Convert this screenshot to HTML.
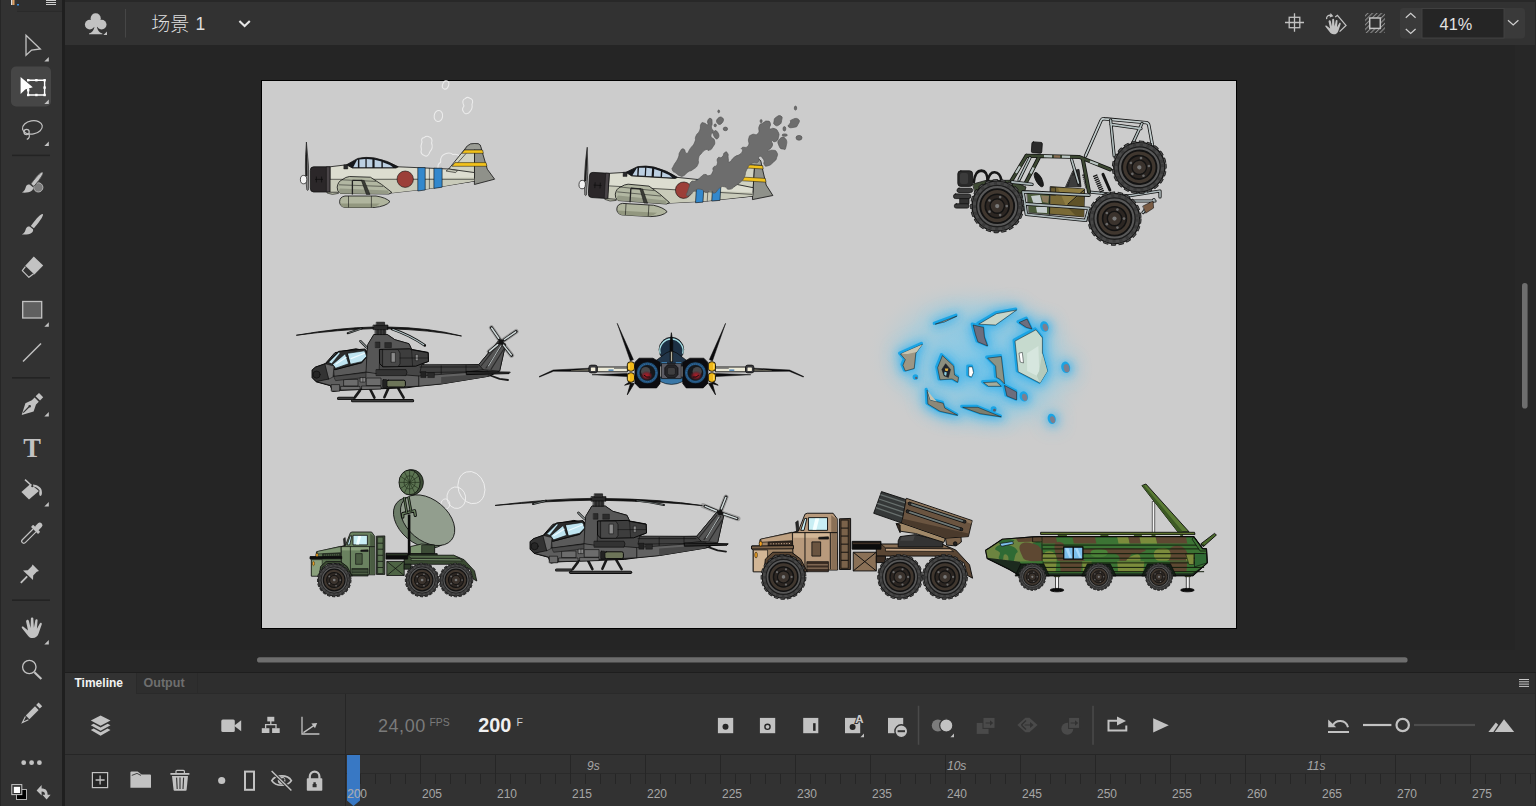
<!DOCTYPE html>
<html lang="zh"><head><meta charset="utf-8"><title>Animate</title>
<style>
html,body{margin:0;padding:0;background:#252525;overflow:hidden}
body{width:1536px;height:806px;position:relative;font-family:"Liberation Sans","Noto Sans CJK SC",sans-serif}
svg{display:block;position:absolute;left:0;top:0}
text{font-family:"Liberation Sans","Noto Sans CJK SC",sans-serif}
.rl{font-size:12px;fill:#a6a6a6}
.rs{font-size:12px;fill:#a6a6a6;font-style:italic}
</style></head><body>
<svg width="1536" height="806" viewBox="0 0 1536 806">
<!-- 10_chrome.svg -->
<!-- backgrounds -->
<rect x="0" y="0" width="1536" height="806" fill="#252525"/>
<!-- left toolbar -->
<rect x="0" y="0" width="62" height="806" fill="#323232"/>
<rect x="0" y="0" width="1" height="806" fill="#262626"/>
<rect x="62" y="0" width="3" height="806" fill="#1f1f1f"/>
<rect x="17" y="0" width="45" height="12" fill="#2f2f2f"/>
<rect x="17" y="11" width="45" height="1" fill="#2a2a2a"/>
<!-- top bar -->
<rect x="65" y="0" width="1471" height="2" fill="#282828"/>
<rect x="65" y="2" width="1471" height="43" fill="#323232"/>
<rect x="1535" y="0" width="1" height="45" fill="#272727"/>
<!-- stage -->
<rect x="261" y="80" width="976" height="549" fill="#000"/>
<rect x="262" y="81" width="974" height="547" fill="#cccccc"/>
<!-- scrollbars -->

<rect x="1515" y="45" width="21" height="605" fill="#272727"/><rect x="65" y="650" width="1471" height="22" fill="#272727"/><rect x="1522" y="283" width="5.6" height="125.5" rx="2.8" fill="#6e6e6e"/>
<rect x="257" y="657.2" width="1150.6" height="5.4" rx="2.7" fill="#6e6e6e"/>
<!-- timeline panel -->
<rect x="65" y="672" width="1471" height="1" fill="#1e1e1e"/>
<rect x="65" y="673" width="1471" height="133" fill="#323232"/>
<rect x="136" y="673" width="1400" height="21" fill="#2e2e2e"/>
<rect x="136" y="673" width="1" height="21" fill="#2a2a2a"/>
<rect x="197" y="673" width="1" height="21" fill="#2a2a2a"/>
<rect x="136" y="693" width="1400" height="1" fill="#2a2a2a"/>
<rect x="65" y="754" width="1471" height="1" fill="#262626"/>
<rect x="345" y="694" width="1" height="112" fill="#262626"/>
<rect x="346" y="773" width="1190" height="1" fill="#2a2a2a"/>

<!-- 12_toolbar.svg -->
<g id="toolbar" fill="#c2c2c2" stroke="none">
<!-- top-left tab bits -->
<rect x="11" y="0" width="1.5" height="5" fill="#dcdcdc"/><rect x="12.5" y="0" width="2" height="5" fill="#e0a060"/><rect x="17" y="4" width="2" height="1.5" fill="#3a8be0"/>
<rect x="46" y="0" width="10" height="1" fill="#cfcfcf"/><rect x="46" y="2" width="10" height="1" fill="#cfcfcf"/><rect x="46" y="4" width="10" height="1" fill="#cfcfcf"/>
<!-- selection arrow -->
<path d="M26 35.2 L40.3 49 L31.6 50 L26 55.2 Z" fill="none" stroke="#c2c2c2" stroke-width="1.3" stroke-linejoin="miter"/>
<path d="M48.8 57 V61.5 H44.3 Z"/>
<!-- free transform (selected) -->
<rect x="11" y="66.5" width="40" height="40" rx="5" fill="#464646"/>
<path d="M20.6 77 L20.6 94 L25.2 89.5 L32.8 87.2 Z" fill="#ffffff"/>
<g fill="none" stroke="#ffffff" stroke-width="1.4"><path d="M28.2 80.2 H44.6 V95 H28.2 V88"/></g>
<g fill="#ffffff"><rect x="27" y="79" width="2.4" height="2.4"/><rect x="35.2" y="79" width="2.4" height="2.4"/><rect x="43.4" y="79" width="2.4" height="2.4"/><rect x="43.4" y="86.4" width="2.4" height="2.4"/><rect x="43.4" y="93.8" width="2.4" height="2.4"/><rect x="35.2" y="93.8" width="2.4" height="2.4"/><rect x="27" y="93.8" width="2.4" height="2.4"/><rect x="27" y="89" width="2.4" height="2.4"/></g>
<path d="M48.8 99.5 V104 H44.3 Z"/>
<!-- lasso -->
<g fill="none" stroke="#c2c2c2" stroke-width="1.2"><ellipse cx="32.4" cy="127.4" rx="10" ry="6.6" transform="rotate(-10 32.4 127.4)"/><circle cx="26.6" cy="132" r="2.6"/><path d="M28.8 133.4 C30 136 29.5 138.5 26.8 139.3"/></g>
<path d="M48.8 141.5 V146 H44.3 Z"/>
<rect x="12" y="154.6" width="38" height="1.6" fill="#232323"/>
<!-- fluid brush -->
<g id="brushA"><path d="M42.7 172.2 C43.8 173 42 177 33.9 186.4 L30.8 184 C38 174.4 41.6 171.4 42.7 172.2 Z"/><path d="M29.9 184.8 L33 187.3 C34 190.5 30 193.2 21.9 192.6 C24.8 191.2 25.4 188.4 26 186.6 C26.8 184.6 28.8 184.2 29.9 184.8 Z"/></g>
<circle cx="38.3" cy="187.4" r="4.6" fill="#7c7c7c" stroke="#b4b4b4" stroke-width="1"/>
<path d="M42.7 172.2 C43.8 173 42 177 33.9 186.4 L30.8 184 C38 174.4 41.6 171.4 42.7 172.2 Z" stroke="#323232" stroke-width="0.8"/>
<!-- brush -->
<g transform="translate(0 41.9)"><path d="M42.7 172.2 C43.8 173 42 177 33.9 186.4 L30.8 184 C38 174.4 41.6 171.4 42.7 172.2 Z"/><path d="M29.9 184.8 L33 187.3 C34 190.5 30 193.2 21.9 192.6 C24.8 191.2 25.4 188.4 26 186.6 C26.8 184.6 28.8 184.2 29.9 184.8 Z"/></g>
<!-- eraser -->
<path d="M33.8 256.6 L43.2 265.6 L34.4 274.5 L25.2 265.8 Z"/>
<path d="M25.4 266.6 L22.3 270.6 L28.9 277.3 L33.6 273.8" fill="none" stroke="#c2c2c2" stroke-width="1.2" stroke-linejoin="round"/>
<!-- rectangle -->
<rect x="22.7" y="301.5" width="19" height="16.5" fill="#606060" stroke="#c2c2c2" stroke-width="1.3"/>
<path d="M48.8 322.3 V326.8 H44.3 Z"/>
<!-- line -->
<path d="M23 361.5 L41 343.5" stroke="#c2c2c2" stroke-width="1.4" fill="none"/>
<rect x="12" y="377" width="38" height="1.6" fill="#232323"/>
<!-- pen -->
<path d="M35.6 396.3 L39 393 L43.2 397.3 L40 400.6 Z"/>
<path d="M21.7 415 L25.4 403.2 L31.8 400.3 L34.6 397.6 L38.8 401.8 L36 404.6 L33.6 411.4 Z M23.6 413 L29.3 407.5 A1.3 1.3 0 1 0 28.4 406.6 L22.9 412.3 Z" fill-rule="evenodd"/>
<path d="M48.8 412 V416.5 H44.3 Z"/>
<!-- T -->
<text x="32.1" y="456.8" font-size="26.5" font-weight="bold" text-anchor="middle" fill="#c2c2c2" style="font-family:'Liberation Serif',serif">T</text>
<!-- bucket -->
<path d="M30.4 484 L38.9 491 L29 499.6 L21.4 492 Z"/>
<path d="M25 479.6 L32.3 486.2" stroke="#c2c2c2" stroke-width="1.5" fill="none"/>
<path d="M33 484.6 C37 484.8 40.6 487 41.6 490 C42.3 493 42 495.6 40.6 496 C39 496 39 493 39.6 490.6 C38 488 36 486.8 33 486.4 Z"/>
<circle cx="32.3" cy="486.2" r="1.1" fill="#323232"/>
<path d="M48.8 502 V506.5 H44.3 Z"/>
<!-- eyedropper -->
<g transform="rotate(45 32 533)"><rect x="29.4" y="519.4" width="5.2" height="8.4" rx="2.5"/><rect x="27" y="526.4" width="10" height="3" rx="0.8"/><path d="M29.9 529.4 V544.6 A2.1 2.1 0 0 0 34.1 544.6 V529.4" fill="none" stroke="#c2c2c2" stroke-width="1.2"/></g>
<!-- pin -->
<path d="M32.6 564.4 L39 571 L36.8 571.8 L33.2 575.6 L33 580 L23 570.4 L27.8 570.2 L31.6 566.4 Z"/>
<path d="M27.2 576.4 L20.8 582.8" stroke="#c2c2c2" stroke-width="1.8" fill="none"/>
<rect x="12" y="599.4" width="38" height="1.6" fill="#232323"/>
<!-- hand -->
<path d="M26.6 620.2 C27.6 619.4 28.6 619.8 28.9 621 L30.6 628 L30.9 618.6 C31 617.3 33.2 617.2 33.3 618.6 L33.9 627.8 L35.4 620 C35.7 618.7 37.8 619 37.6 620.4 L36.9 628.8 L39.8 623.4 C40.4 622.3 42.2 623 41.8 624.3 L38.6 633.6 C37.6 636.5 35.6 638.1 32.8 638.1 C30 638.1 28.6 636.8 27 634.4 L21.9 628 C21.3 626.8 22.4 626.3 23.5 626.8 L28 630.4 L26.1 621.6 C26 621 26.2 620.5 26.6 620.2 Z"/>
<path d="M48.8 640 V644.5 H44.3 Z"/>
<!-- zoom -->
<circle cx="29.3" cy="667" r="6.7" fill="none" stroke="#c2c2c2" stroke-width="1.3"/>
<path d="M34.4 672.2 L41.4 679" stroke="#c2c2c2" stroke-width="2.2" fill="none"/>
<!-- pencil -->
<path d="M36.2 705 L38.6 702.6 L42.2 706.2 L39.8 708.6 Z"/>
<path d="M25.8 715.6 L35 706.3 L38.6 709.9 L29.4 719.2 Z"/>
<path d="M25.4 716.6 L22.4 722.6 L28.4 719.8" fill="none" stroke="#c2c2c2" stroke-width="1.1" stroke-linejoin="miter"/>
<!-- dots -->
<circle cx="23.7" cy="762.7" r="2.4"/><circle cx="31.6" cy="762.7" r="2.4"/><circle cx="39.4" cy="762.7" r="2.4"/>
<!-- swatch + swap -->
<rect x="16.5" y="789.5" width="10" height="10" fill="#000" stroke="#b0b0b0" stroke-width="1"/>
<rect x="11.8" y="784.6" width="10" height="10" fill="#303030" stroke="#c8c8c8" stroke-width="1"/>
<rect x="13.8" y="786.8" width="6.2" height="6.2" fill="#fff"/>
<path d="M36.6 790.6 L41.6 785 L41.6 788.6 C45.6 788.6 47.6 790.6 47.6 794.8 L50.6 794.8 L46.6 799.6 L42.4 794.8 L45 794.8 C45 792.4 44 791.4 41.6 791.4 L41.6 795.4 Z"/>
</g>

<!-- 13_topbar.svg -->
<g id="topbar" fill="#c2c2c2">
<!-- club -->
<circle cx="95.7" cy="18.4" r="5.1"/><circle cx="89.8" cy="24.6" r="4.9"/><circle cx="101.6" cy="24.6" r="4.9"/><circle cx="95.7" cy="24.2" r="3"/>
<path d="M95 22 H96.4 C96.6 29 98.5 32.4 102.4 33.4 V34.2 H89 V33.4 C92.9 32.4 94.8 29 95 22 Z"/>
<path d="M107 31.4 V35 H103.4 Z"/>
<rect x="125" y="9" width="1" height="28.5" fill="#464646"/>
<text x="151.3" y="31.2" font-size="19" fill="#dedede" font-weight="300">场景<tspan font-size="17.5" dx="6.3" dy="-1">1</tspan></text>
<path d="M239.4 21 L244.6 26 L249.8 21" fill="none" stroke="#e6e6e6" stroke-width="2.1"/>
<!-- crosshair -->
<g fill="none" stroke="#c2c2c2" stroke-width="1.3"><path d="M1285 22.5 H1304 M1294.5 13.2 V31.8"/><rect x="1289.2" y="17.3" width="10.6" height="10.4"/></g>
<!-- hand rotate -->
<path d="M1329 20.6 C1329.8 20 1330.6 20.3 1330.8 21.2 L1332 26.6 L1332.2 19.6 C1332.3 18.6 1334 18.5 1334.1 19.6 L1334.6 26.4 L1335.8 20.6 C1336 19.6 1337.6 19.8 1337.5 20.9 L1337 27.2 L1339.2 23.2 C1339.7 22.3 1341 22.9 1340.7 23.9 L1338.3 30.9 C1337.5 33.1 1336 34.3 1333.8 34.3 C1331.6 34.3 1330.6 33.3 1329.3 31.5 L1325.4 26.6 C1325 25.7 1325.8 25.3 1326.6 25.7 L1330.1 28.4 L1328.6 21.7 C1328.5 21.2 1328.7 20.8 1329 20.6 Z"/>
<g fill="none" stroke="#c2c2c2" stroke-width="1.3"><path d="M1335.2 17 L1337.4 15.3 L1346 25.4 L1339.6 31.6"/><path d="M1326.6 19.2 C1326.2 16 1329 14.6 1331.4 15.6"/></g>
<path d="M1330.6 13 L1333.4 16.2 L1329.6 17.4 Z"/>
<!-- clip -->
<defs><pattern id="hatch" width="3.2" height="3.2" patternUnits="userSpaceOnUse" patternTransform="rotate(-45)"><rect x="0" y="0" width="3.2" height="1.1" fill="#8a8a8a"/></pattern></defs>
<rect x="1365" y="13" width="20" height="20" rx="1.5" fill="url(#hatch)"/>
<rect x="1369.7" y="18" width="10.6" height="10.4" fill="#323232" stroke="#c2c2c2" stroke-width="1.5"/>
<!-- zoom widget -->
<rect x="1400" y="8" width="125" height="30.5" rx="3.5" fill="#3a3a3a"/>
<rect x="1422" y="8.5" width="82" height="29.5" fill="#252525" stroke="#404040" stroke-width="1"/>
<g fill="none" stroke="#cfcfcf" stroke-width="1.2"><path d="M1405.8 17.8 L1410.7 13.4 L1415.6 17.8"/><path d="M1405.8 29 L1410.7 33.4 L1415.6 29"/><path d="M1508 20.2 L1513.2 25 L1518.4 20.2"/></g>
<text x="1439.6" y="29.8" font-size="16.3" fill="#e2e2e2">41%</text>
</g>

<!-- 14_timeline.svg -->
<g id="tl" fill="#c2c2c2">
<text x="74.5" y="687" font-size="12" font-weight="bold" fill="#f2f2f2">Timeline</text>
<text x="143.6" y="687" font-size="12.5" font-weight="bold" fill="#6e6e6e">Output</text>
<g fill="#c8c8c8"><rect x="1519" y="679" width="10" height="1"/><rect x="1519" y="681.3" width="10" height="1"/><rect x="1519" y="683.6" width="10" height="1"/><rect x="1519" y="685.9" width="10" height="1"/></g>
<rect x="1535" y="673" width="1" height="133" fill="#282828"/>
<!-- layers -->
<path d="M90.8 720.6 L100.6 715.6 L110.5 720.6 L100.6 725.7 Z"/>
<path d="M90.8 725.2 L93.6 723.8 L100.6 727.5 L107.6 723.8 L110.5 725.2 L100.6 730.7 Z"/>
<path d="M90.8 729.9 L93.6 728.5 L100.6 732.2 L107.6 728.5 L110.5 729.9 L100.6 735.8 Z"/>
<!-- camera -->
<rect x="221.3" y="719.5" width="13.5" height="12.6" rx="1.5"/><path d="M234 725.8 L241.2 720.2 V731.2 Z"/>
<!-- hierarchy -->
<rect x="267.3" y="716.8" width="7" height="4.6"/><rect x="261.8" y="728.2" width="7.6" height="4.8"/><rect x="272.1" y="728.2" width="7.6" height="4.8"/>
<path d="M270.8 721 V724.6 M265.6 728.4 V724.6 H276 V728.4" fill="none" stroke="#c2c2c2" stroke-width="1.3"/>
<!-- graph -->
<g fill="none" stroke="#c2c2c2" stroke-width="1.3"><path d="M302 716.8 V734 H319.4"/><path d="M303.4 732.6 L315.6 724.4"/></g><path d="M317.2 723 L311.4 723.6 L315 728.2 Z"/>
<!-- fps -->
<text x="378" y="732" font-size="18" fill="#7a7a7a" letter-spacing="0.55">24,00</text>
<text x="429.5" y="726" font-size="10.4" fill="#7a7a7a">FPS</text>
<text x="478.2" y="732" font-size="19.8" font-weight="bold" fill="#f0f0f0">200</text>
<text x="516.4" y="726" font-size="10.5" fill="#cfcfcf">F</text>
<!-- keyframe buttons -->
<rect x="717.9" y="717.9" width="15.3" height="15.3"/><circle cx="725.5" cy="726.8" r="3" fill="#262626"/>
<rect x="759.9" y="717.9" width="15.3" height="15.3"/><circle cx="767.5" cy="726.8" r="2.6" fill="none" stroke="#262626" stroke-width="1.4"/>
<rect x="803.2" y="717.9" width="15.1" height="15.3"/><rect x="813.1" y="723.2" width="2.5" height="7.6" fill="#262626"/>
<rect x="845" y="717.9" width="15.2" height="15.3"/><circle cx="852.6" cy="727" r="3" fill="#262626"/>
<text x="855.2" y="723" font-size="11.5" font-weight="bold" fill="#c8c8c8" stroke="#323232" stroke-width="2" paint-order="stroke">A</text>
<path d="M864 733.6 V737.2 H860.4 Z"/>
<rect x="888" y="717.9" width="15.2" height="15.3"/><circle cx="901.3" cy="731.2" r="6.4" fill="#c2c2c2" stroke="#323232" stroke-width="1.4"/><rect x="897.6" y="730.2" width="7.4" height="2" fill="#323232"/>
<rect x="917.8" y="705.8" width="1.5" height="39" fill="#4a4a4a"/>
<!-- onion -->
<circle cx="937.8" cy="725.4" r="6" fill="#7c7c7c"/><circle cx="946.3" cy="725.4" r="6.6" fill="#c2c2c2" stroke="#323232" stroke-width="1.2"/>
<path d="M954 733.6 V737.2 H950.4 Z"/>
<!-- disabled -->
<g fill="#4a4a4a">
<rect x="976.7" y="722.9" width="11.9" height="11"/><rect x="983" y="717.4" width="12" height="11" stroke="#323232" stroke-width="1"/>
<path d="M985.6 722.4 H990 V720.2 L993.2 723 L990 725.8 V723.6 H985.6 Z" fill="#323232"/>
<path d="M1017.3 725 L1025.4 717.8 L1029.4 717.8 L1037.6 725 L1029.4 732.2 L1025.4 732.2 Z"/>
<path d="M1021.4 725 L1026 720.6 M1021.4 725 L1026 729.4" stroke="#323232" stroke-width="1.4" fill="none"/>
<path d="M1024.6 724.4 H1030 V722 L1033.6 725 L1030 728 V725.6 H1024.6 Z" fill="#323232"/>
<circle cx="1067.3" cy="728.8" r="6"/><rect x="1068.6" y="717.4" width="11" height="11" stroke="#323232" stroke-width="1"/>
<path d="M1070.6 722.4 H1075 V720.2 L1078.2 723 L1075 725.8 V723.6 H1070.6 Z" fill="#323232"/>
</g>
<rect x="1092.3" y="705.8" width="1.5" height="39" fill="#4a4a4a"/>
<!-- loop -->
<path d="M1117.4 720.8 H1108.5 V730.5 H1126.3 V725.6" fill="none" stroke="#c2c2c2" stroke-width="2"/><path d="M1117 716.6 L1126 721 L1117 725.4 Z"/>
<!-- play -->
<path d="M1153.2 718.2 V732.4 L1168.8 725.3 Z"/>
<!-- undo -->
<rect x="1328" y="731" width="21" height="2"/>
<path d="M1333 725.4 C1335.6 719.6 1345.8 719 1348 727.2" fill="none" stroke="#c2c2c2" stroke-width="2"/><path d="M1328.2 719.4 V727.2 H1336.2 Z"/>
<!-- slider -->
<rect x="1363" y="723.9" width="28.4" height="2.2"/><circle cx="1402.7" cy="725" r="6.2" fill="none" stroke="#c2c2c2" stroke-width="2.2"/><rect x="1414" y="723.9" width="61" height="2.2" fill="#4d4d4d"/>
<!-- mountains -->
<path d="M1504 719.2 L1514.2 732 H1494.8 Z"/><path d="M1488.4 732 L1495.8 722.6 L1498.2 724.8 L1493.4 732 Z"/>
<!-- layer controls -->
<rect x="92.4" y="772.6" width="15.2" height="15" fill="#262626" stroke="#c2c2c2" stroke-width="1.2"/><path d="M95.6 780 H104.6 M100.1 775.5 V784.5" stroke="#c2c2c2" stroke-width="1.3" fill="none"/>
<path d="M130.4 772.6 Q130.4 771.6 131.4 771.6 H137.6 L141.6 774.6 H150 Q151 774.6 151 775.6 V787.8 H130.4 Z"/><path d="M131.8 775.4 L137 773.4 L141 775.4" fill="none" stroke="#323232" stroke-width="0.9"/>
<path d="M176 773 V771.2 Q176 770.3 177 770.3 H183.4 Q184.4 770.3 184.4 771.2 V773" fill="none" stroke="#c2c2c2" stroke-width="1.2"/><rect x="170.4" y="773" width="19" height="1.8"/>
<path d="M172 776 H188 L186.6 790 Q186.5 790.8 185.6 790.8 H174.6 Q173.7 790.8 173.6 790 Z"/><path d="M176.6 777.6 L177.2 789 M180 777.6 V789 M183.6 777.6 L183 789" stroke="#323232" stroke-width="1.1" fill="none"/>
<circle cx="221.7" cy="780.5" r="3.6"/>
<rect x="245" y="771.6" width="9" height="18.2" fill="none" stroke="#c2c2c2" stroke-width="2"/>
<path d="M271.8 780.6 C275.6 774.4 287.6 774.4 291.4 780.6 C287.6 786.8 275.6 786.8 271.8 780.6 Z" fill="none" stroke="#c2c2c2" stroke-width="1.7"/><circle cx="281.6" cy="780.6" r="3.8"/><circle cx="283" cy="779.4" r="1.5" fill="#323232"/>
<path d="M272 771.4 L291.4 790.4" stroke="#323232" stroke-width="3.4" fill="none"/><path d="M271.6 771 L291.4 790.6" stroke="#c2c2c2" stroke-width="1.4" fill="none"/>
<path d="M309.8 779 V776.4 A4.8 4.8 0 0 1 319.4 776.4 V779" fill="none" stroke="#c2c2c2" stroke-width="2.2"/><rect x="306.8" y="778.2" width="15.5" height="12.5" rx="0.8"/><path d="M313.4 782.2 H315.8 V784 H316.6 V787.2 H312.6 V784 H313.4 Z" fill="#323232"/>
<!-- playhead -->
<path d="M347 755 H360 V800.6 L353.5 806 L347 800.6 Z" fill="#3878c4"/>
<text x="347.6" y="798" font-size="12" fill="#6f9fd8">20</text>
</g>

<g id="ruler">
<rect x="345" y="755" width="1" height="29" fill="#262626"/>
<text x="347" y="798" class="rl">200</text>
<rect x="360" y="774" width="1" height="10" fill="#262626"/>
<rect x="375" y="774" width="1" height="10" fill="#262626"/>
<rect x="390" y="774" width="1" height="10" fill="#262626"/>
<rect x="405" y="774" width="1" height="10" fill="#262626"/>
<rect x="420" y="755" width="1" height="29" fill="#262626"/>
<text x="422" y="798" class="rl">205</text>
<rect x="435" y="774" width="1" height="10" fill="#262626"/>
<rect x="450" y="774" width="1" height="10" fill="#262626"/>
<rect x="465" y="774" width="1" height="10" fill="#262626"/>
<rect x="480" y="774" width="1" height="10" fill="#262626"/>
<rect x="495" y="755" width="1" height="29" fill="#262626"/>
<text x="497" y="798" class="rl">210</text>
<rect x="510" y="774" width="1" height="10" fill="#262626"/>
<rect x="525" y="774" width="1" height="10" fill="#262626"/>
<rect x="540" y="774" width="1" height="10" fill="#262626"/>
<rect x="555" y="774" width="1" height="10" fill="#262626"/>
<rect x="570" y="755" width="1" height="29" fill="#262626"/>
<text x="572" y="798" class="rl">215</text>
<rect x="585" y="774" width="1" height="10" fill="#262626"/>
<rect x="600" y="774" width="1" height="10" fill="#262626"/>
<rect x="615" y="774" width="1" height="10" fill="#262626"/>
<rect x="630" y="774" width="1" height="10" fill="#262626"/>
<rect x="645" y="755" width="1" height="29" fill="#262626"/>
<text x="647" y="798" class="rl">220</text>
<rect x="660" y="774" width="1" height="10" fill="#262626"/>
<rect x="675" y="774" width="1" height="10" fill="#262626"/>
<rect x="690" y="774" width="1" height="10" fill="#262626"/>
<rect x="705" y="774" width="1" height="10" fill="#262626"/>
<rect x="720" y="755" width="1" height="29" fill="#262626"/>
<text x="722" y="798" class="rl">225</text>
<rect x="735" y="774" width="1" height="10" fill="#262626"/>
<rect x="750" y="774" width="1" height="10" fill="#262626"/>
<rect x="765" y="774" width="1" height="10" fill="#262626"/>
<rect x="780" y="774" width="1" height="10" fill="#262626"/>
<rect x="795" y="755" width="1" height="29" fill="#262626"/>
<text x="797" y="798" class="rl">230</text>
<rect x="810" y="774" width="1" height="10" fill="#262626"/>
<rect x="825" y="774" width="1" height="10" fill="#262626"/>
<rect x="840" y="774" width="1" height="10" fill="#262626"/>
<rect x="855" y="774" width="1" height="10" fill="#262626"/>
<rect x="870" y="755" width="1" height="29" fill="#262626"/>
<text x="872" y="798" class="rl">235</text>
<rect x="885" y="774" width="1" height="10" fill="#262626"/>
<rect x="900" y="774" width="1" height="10" fill="#262626"/>
<rect x="915" y="774" width="1" height="10" fill="#262626"/>
<rect x="930" y="774" width="1" height="10" fill="#262626"/>
<rect x="945" y="755" width="1" height="29" fill="#262626"/>
<text x="947" y="798" class="rl">240</text>
<rect x="960" y="774" width="1" height="10" fill="#262626"/>
<rect x="975" y="774" width="1" height="10" fill="#262626"/>
<rect x="990" y="774" width="1" height="10" fill="#262626"/>
<rect x="1005" y="774" width="1" height="10" fill="#262626"/>
<rect x="1020" y="755" width="1" height="29" fill="#262626"/>
<text x="1022" y="798" class="rl">245</text>
<rect x="1035" y="774" width="1" height="10" fill="#262626"/>
<rect x="1050" y="774" width="1" height="10" fill="#262626"/>
<rect x="1065" y="774" width="1" height="10" fill="#262626"/>
<rect x="1080" y="774" width="1" height="10" fill="#262626"/>
<rect x="1095" y="755" width="1" height="29" fill="#262626"/>
<text x="1097" y="798" class="rl">250</text>
<rect x="1110" y="774" width="1" height="10" fill="#262626"/>
<rect x="1125" y="774" width="1" height="10" fill="#262626"/>
<rect x="1140" y="774" width="1" height="10" fill="#262626"/>
<rect x="1155" y="774" width="1" height="10" fill="#262626"/>
<rect x="1170" y="755" width="1" height="29" fill="#262626"/>
<text x="1172" y="798" class="rl">255</text>
<rect x="1185" y="774" width="1" height="10" fill="#262626"/>
<rect x="1200" y="774" width="1" height="10" fill="#262626"/>
<rect x="1215" y="774" width="1" height="10" fill="#262626"/>
<rect x="1230" y="774" width="1" height="10" fill="#262626"/>
<rect x="1245" y="755" width="1" height="29" fill="#262626"/>
<text x="1247" y="798" class="rl">260</text>
<rect x="1260" y="774" width="1" height="10" fill="#262626"/>
<rect x="1275" y="774" width="1" height="10" fill="#262626"/>
<rect x="1290" y="774" width="1" height="10" fill="#262626"/>
<rect x="1305" y="774" width="1" height="10" fill="#262626"/>
<rect x="1320" y="755" width="1" height="29" fill="#262626"/>
<text x="1322" y="798" class="rl">265</text>
<rect x="1335" y="774" width="1" height="10" fill="#262626"/>
<rect x="1350" y="774" width="1" height="10" fill="#262626"/>
<rect x="1365" y="774" width="1" height="10" fill="#262626"/>
<rect x="1380" y="774" width="1" height="10" fill="#262626"/>
<rect x="1395" y="755" width="1" height="29" fill="#262626"/>
<text x="1397" y="798" class="rl">270</text>
<rect x="1410" y="774" width="1" height="10" fill="#262626"/>
<rect x="1425" y="774" width="1" height="10" fill="#262626"/>
<rect x="1440" y="774" width="1" height="10" fill="#262626"/>
<rect x="1455" y="774" width="1" height="10" fill="#262626"/>
<rect x="1470" y="755" width="1" height="29" fill="#262626"/>
<text x="1472" y="798" class="rl">275</text>
<rect x="1485" y="774" width="1" height="10" fill="#262626"/>
<rect x="1500" y="774" width="1" height="10" fill="#262626"/>
<rect x="1515" y="774" width="1" height="10" fill="#262626"/>
<rect x="1530" y="774" width="1" height="10" fill="#262626"/>
<text x="587" y="770" class="rs">9s</text>
<text x="947" y="770" class="rs">10s</text>
<text x="1307" y="770" class="rs">11s</text>
</g>
<!-- 20_defs.svg -->
<defs>
<g id="wheel" stroke="none" stroke-linecap="butt">
 <circle r="0.965" fill="none" stroke="#141414" stroke-width="0.11" stroke-dasharray="0.19 0.1"/>
 <circle r="0.95" fill="#484848" stroke="#141414" stroke-width="0.05"/>
 <circle r="0.975" fill="none" stroke="#484848" stroke-width="0.05" stroke-dasharray="0.15 0.143" stroke-dashoffset="-0.02"/>
 <circle r="0.86" fill="none" stroke="#3a3a3a" stroke-width="0.1" stroke-dasharray="0.12 0.14"/>
 <circle r="0.78" fill="#585858" stroke="#1c1c1c" stroke-width="0.05"/>
 <circle r="0.64" fill="#40372f" stroke="#121212" stroke-width="0.07"/>
 <circle r="0.45" fill="#2c2622" stroke="#121212" stroke-width="0.06"/>
 <circle r="0.27" fill="#3b332d" stroke="#121212" stroke-width="0.05"/>
 <circle r="0.08" fill="#7a7a7a"/>
 <g fill="#6a6a6a"><circle cx="0.36" cy="0" r="0.05"/><circle cx="0.11" cy="0.34" r="0.05"/><circle cx="-0.29" cy="0.21" r="0.05"/><circle cx="-0.29" cy="-0.21" r="0.05"/><circle cx="0.11" cy="-0.34" r="0.05"/></g>
</g>
<g id="plane" stroke="#111" stroke-width="0.8" stroke-linejoin="round">
 <!-- fin -->
 <path d="M448.7 169 L467.3 146 Q470 143.4 474.6 143.5 L474.6 181 L440 186 Z" fill="#d0d2c2"/>
 <path d="M474.6 143.5 Q479 143.4 480.2 145 L487.3 169.2 L494.6 179.2 L474.4 184.5 Z" fill="#8f918a"/>
 <path d="M467.3 146 Q470 143.4 474.6 143.5 Q479 143.4 480.2 145 L481.6 149.8 H464.8 Z" fill="#9a9c94" stroke-width="0.5"/>
 <path d="M464.6 150 H482.6 L483.4 153.3 H461.8 Z" fill="#f2c21c" stroke-width="0.5"/>
 <path d="M455 162.6 H486 L487 166.3 H452 Z" fill="#f2c21c" stroke-width="0.5"/>
 <path d="M466 153.5 L458 162.5" fill="none" stroke-width="0.6"/>
 <!-- fuselage -->
 <path d="M329.9 166.8 L346.5 164.8 L398.3 166.8 L448.7 169 L474.6 172.6 L474.4 181 L428.8 188.7 L389 193.2 L329.9 192 Z" fill="#dcddd0"/>
 <path d="M329.9 179.4 L474 177.4 L474.4 181 L428.8 188.7 L389 193.2 L329.9 192 Z" fill="#c9cbba" stroke="none"/>
 <path d="M329.9 179.3 H474" fill="none" stroke-width="0.6"/>
 <path d="M448.7 169 L457.6 170.6 L455.6 172.6 L446 171 Z" fill="#c6c8b8" stroke-width="0.6"/>
 <!-- bands -->
 <path d="M417.8 167.6 H425.2 V190 L417.8 191 Z" fill="#3388cc" stroke-width="0.6"/>
 <path d="M433.9 168.2 H442.1 V187.2 L433.9 188.4 Z" fill="#3388cc" stroke-width="0.6"/>
 <path d="M429.4 168 V189" fill="none" stroke-width="0.5"/>
 <circle cx="405.2" cy="179.2" r="8.2" fill="#9c3f38" stroke-width="0.6"/>
 <!-- canopy -->
 <path d="M346.5 164.8 L357.8 158.4 Q366 156.6 374.4 157.9 Q388 160.6 398.3 166.8 L396 168 H352.4 Z" fill="#16181c"/>
 <g fill="#bcd0e2" stroke="none"><path d="M353.2 167.2 L357 160 L357.9 159.8 V167.2 Z"/><path d="M359.4 159.5 L365.4 159.1 V167.2 H359.4 Z"/><path d="M366.7 159.1 L372.4 159.4 V167.2 H366.7 Z"/><path d="M374.6 159.8 L381.4 161.6 V167.2 H374.6 Z"/><path d="M382.8 162.2 L389.8 165 L393 167.2 H382.8 Z"/></g>
 <rect x="343.8" y="164.8" width="4" height="4.2" fill="#2a2a2c" stroke-width="0.4"/>
 <!-- cowling -->
 <path d="M313.6 166.8 H329.9 V192 H313.6 Q310.3 192 310.3 188 V170.4 Q310.3 166.8 313.6 166.8 Z" fill="#2b2729"/>
 <path d="M326.4 166.8 H329.9 V192 H326.4 Z" fill="#4a4548" stroke-width="0.5"/>
 <path d="M315 179.4 H323 M316.4 176.6 V182.4 M321.6 176.6 V182.4" fill="none" stroke="#0c0c0c" stroke-width="0.7"/>
 <path d="M327 193 Q332 195.6 338.5 193.4 L338 192.2 H327 Z" fill="#b5b9a5" stroke-width="0.6"/>
 <!-- prop -->
 <path d="M306.4 142 Q309.6 166 308.4 189.8 Q307.6 191 306.8 189.8 Q304.2 168 306.4 142 Z" fill="#8e8e8e" stroke-width="0.6"/>
 <path d="M306.3 142 Q307.6 160 307.4 176 L305.6 176 Q305.4 158 306.3 142 Z" fill="#1a1a1a" stroke="none"/>
 <ellipse cx="303.6" cy="179.6" rx="3.2" ry="4.2" fill="#f4f4f4" stroke-width="0.7"/>
 <!-- wing -->
 <path d="M337.2 187.2 Q338 181.4 342 179.8 Q346 176.8 349.4 176.5 L370.4 177.2 Q382 184 391.8 192.4 L389 194 L340.4 193.4 Q336.8 191 337.2 187.2 Z" fill="#b2b7a2"/>
 <path d="M340 188.4 L388 190.6 L389 194 L340.4 193.4 Q337.6 191.4 340 188.4 Z" fill="#959a86" stroke="none"/>
 <path d="M342 179.8 L376 181.4 M339 184.8 L383 186.4" fill="none" stroke-width="0.5"/>
 <path d="M352.4 180.4 V194.4 M352.4 180.4 H362.4" fill="none" stroke="#222" stroke-width="1.3"/><path d="M361.4 180.4 H364.2 L370 194.4 H366.4 Z" fill="#3a3c36" stroke-width="0.5"/>
 <!-- tank -->
 <path d="M345 196 H376 Q386 197.6 390 201.6 Q386 206.4 374 207.5 H345 Q339.6 206.4 339.6 201.8 Q339.6 197 345 196 Z" fill="#b0b59e"/>
 <path d="M345 203.4 H380 Q376 207 372 207.5 H345 Q341 206.6 340.4 203.4 Z" fill="#92977f" stroke="none"/>
 <path d="M348.5 196 V207.4 M371.4 196 V207.5" fill="none" stroke-width="0.6"/>
</g>
<g id="heli" stroke="#0a0a0a" stroke-width="1" stroke-linejoin="round" stroke-linecap="round">
 <!-- skids -->
 <g fill="none" stroke="#1a1a1a" stroke-width="2.6"><path d="M354.8 397.4 L360 390.4 M369.6 388 L374.4 397.6 M384.4 397.2 L388.2 388.6 M398.4 388.6 L403.6 397.6"/></g>
 <path d="M352.6 400.7 H412.6" stroke="#0e0e0e" stroke-width="3.2" fill="none"/><path d="M352.6 400.7 H412.6" stroke="#3c3c3c" stroke-width="1.6" fill="none"/>
 <path d="M338.6 398.4 H353" stroke="#0e0e0e" stroke-width="3.2" fill="none"/><path d="M338.6 398.4 H353" stroke="#3c3c3c" stroke-width="1.6" fill="none"/>
 <!-- tail skid & stabilizer -->
 <path d="M489 375 L499.6 378.8 L508 380" fill="none" stroke="#1a1a1a" stroke-width="1.8"/>
 <path d="M312.5 369.7 L315.5 367.1 L325.2 363.7 L334.9 352.7 L355.9 348.8 L367.1 351.2 L368.2 344.2 L373.9 334.5 L387.3 334.5 L394.8 339.7 L409.0 343.7 L411.6 349.4 L428.1 352.4 L428.5 361.4 L422.1 363.7 L424.8 365.6 L478.7 364.7 L498.9 340.5 L505.6 344.2 L499.6 371.1 L489.2 376.1 L441.2 383.9 L418.8 386.1 L406.8 387.8 L340.9 390.2 L332.7 391.4 L330.4 385.7 L316.2 381.8 L312.5 377.9 Z" fill="#464646"/>
 <path d="M478.7 364.7 L498.9 340.5 L505.6 344.2 L499.6 371.1 L483.2 369.7 Z" fill="#555" stroke-width="0.6"/>
 <path d="M481 366 L499 343.4 M486 368 L502.6 345 M491 369.4 L504.4 348" fill="none" stroke="#2a2a2a" stroke-width="1.1"/>
 <path d="M488.4 366 L501 345.6" fill="none" stroke="#aeb6b6" stroke-width="1"/>
 <path d="M422.1 364.4 L478.7 364.7 L483.2 369.7 L466.7 371.9 L420.3 372.6 Z" fill="#3f3f3f" stroke-width="0.6"/>
 <path d="M441.2 366 V383.6 M466 365.6 V379.6 M420 367 H478" fill="none" stroke-width="0.6"/>
 <path d="M418.8 376 L488 371 L487.7 376.4 L441.2 384 L418.8 386.2 Z" fill="#626262" stroke-width="0.6"/>
 <path d="M441.2 377 L487.8 373.4 L487.7 376.4 L441.2 384 Z" fill="#484848" stroke="none"/>
 <path d="M466.7 371.4 L510.2 372.2 L509 373.6 L466.7 374.6 Z" fill="#2a2a2a"/>
 <rect x="421" y="371.6" width="5" height="6" fill="#222" stroke-width="0.4"/><rect x="428" y="372.6" width="6.4" height="5" fill="#2a2a2a" stroke-width="0.4"/>
 <!-- lower hull panels -->
 <path d="M316.4 381.6 L330.4 385.4 L332.8 391.4 L341 390 L418.8 386.2 V376 L367 372 L334 376 Z" fill="#5e5e5e" stroke-width="0.7"/>
 <path d="M334 369.8 L362 362.8 L367 356 L366.4 372 L334.4 376.4 Z" fill="#5a5a5a" stroke-width="0.6"/>
 <path d="M344 379.4 H358 V386 H344 Z M366.6 378 H381 V385.6 H366.6 Z M341 386.4 H360 V389.6 L341 390 Z M362 386 H381 V389 L362 389.6 Z" fill="#6c6c6c" stroke-width="0.6"/>
 <path d="M334 376.4 L366 372.6 V377.4 L336 380.6 Z" fill="#4a4a4a" stroke-width="0.5"/>
 <rect x="331.6" y="384.6" width="8" height="6.6" fill="#6a6a6a" stroke-width="0.6"/>
 <rect x="360.4" y="377.6" width="5" height="4.4" fill="#8a8a8a" stroke-width="0.5"/><path d="M362.9 377.6 V382" stroke-width="0.5"/>
 <!-- upper body -->
 <path d="M326.3 363.2 L338.7 351.3 L365 349 L368 355.3 L361.6 362.6 L335.4 369.6 L327 367.4 Z" fill="#2c2c2c"/>
 <path d="M328.8 362.3 L338.8 352.3 L340.2 353 L331.8 363.4 Z" fill="#bfe4f0" stroke-width="0.4"/>
 <path d="M332.8 364.2 L345.2 353.8 L348.6 363.7 L335.8 368.2 Z" fill="#bfe4f0" stroke-width="0.6"/>
 <path d="M347.7 353.3 L364.5 350.8 L366.7 356.3 L361.6 361.7 L350.6 364.2 Z" fill="#bfe4f0" stroke-width="0.6"/>
 <path d="M336 364 L346 357.6 M351 358.6 L364.6 353.2" stroke="#eefaff" stroke-width="1.2" fill="none"/>
 <path d="M367.9 344.2 L373.9 334.5 H387.3 L394.8 339.7 L409 343.8 L411.6 349.4 L380 349.6 L379 374 L366 372 L367.1 351.2 Z" fill="#565656" stroke-width="0.6"/>
 <rect x="375.6" y="342" width="4.4" height="5.6" fill="#2c2c2c" stroke-width="0.4"/><rect x="385" y="342.6" width="6.4" height="5" fill="#2c2c2c" stroke-width="0.4"/>
 <path d="M379.8 349.4 L409.8 348.8 L411.6 349.7 L428.1 352.7 L428.5 361.4 L422.1 363.7 L415.8 366.2 L382.8 366.8 L379.8 363.7 Z" fill="#3d3d3d"/>
 <path d="M383 349.6 H398 L400 353 V364 L398 366.6 H383 Z" fill="#484848" stroke-width="0.6"/>
 <rect x="391.4" y="352.6" width="4" height="9.6" fill="#8a8a8a" stroke-width="0.5"/>
 <rect x="415.6" y="354.6" width="2.6" height="6" fill="#8a8a8a" stroke-width="0.4"/>
 <path d="M400 358 H428 M411.6 350 L412.6 366" fill="none" stroke-width="0.5"/>
 <!-- pod & gun mount -->
 <path d="M376.4 369.6 H406 Q408 372 406 375.6 H376.4 Z" fill="#333" stroke-width="0.6"/>
 <rect x="386.6" y="380.2" width="18.8" height="6.8" rx="1.6" fill="#6d7559"/>
 <rect x="382.6" y="379.6" width="4.4" height="8" rx="1" fill="#222" stroke-width="0.5"/>
 <!-- nose -->
 <path d="M312.5 369.7 L315.5 367.2 L325.2 363.8 L330 368 L329 379 L316.4 381.6 L312.5 378 Z" fill="#333" stroke-width="0.7"/>
 <circle cx="316.6" cy="374.6" r="3.6" fill="#262626" stroke-width="0.6"/>
 <path d="M325.2 363.8 L334 366 L333 377 L329 379 Z" fill="#6a6a6a" stroke-width="0.5"/>
 <path d="M360.4 341.2 L366.6 347.4" stroke="#0e0e0e" stroke-width="2.4" fill="none"/><path d="M360.4 341.2 L366.6 347.4" stroke="#8e9696" stroke-width="1.1" fill="none"/>
 <!-- hub -->
 <rect x="373.4" y="325" width="14.6" height="4.6" fill="#2a2a2a" stroke-width="0.6"/><rect x="376.6" y="322.2" width="8" height="3.4" fill="#333" stroke-width="0.6"/><rect x="375.4" y="329.6" width="10.4" height="5" fill="#3a3a3a" stroke-width="0.6"/>
 <path d="M378 329.6 V334.5 M381 329.6 V334.5 M384 329.6 V334.5" stroke-width="0.6"/>
</g>
</defs>

<!-- 21_planes.svg -->
<g id="plane1">
 <g fill="none" stroke="#ececec" stroke-width="1.05" stroke-linejoin="round">
  <ellipse cx="445.6" cy="85" rx="3" ry="4.2" transform="rotate(20 445.6 85)"/>
  <path d="M464 106 Q461 100 465.4 98.6 Q467 96.4 470 98.2 Q474 99.4 472 104.4 Q473 109.4 468.6 113 Q465 115 463.4 111.6 Q461.4 109.2 464 106 Z"/>
  <ellipse cx="438.4" cy="116" rx="4.2" ry="5.6" transform="rotate(8 438.4 116)"/>
  <path d="M422 142 Q420.6 138 424.4 137.4 Q426.6 135.4 429.4 137 Q433 138.4 431.6 143 Q433.4 148 430 151.6 Q428 157.6 424.4 155.6 Q420 154 421.4 149.6 Q420.4 145.6 422 142 Z"/>
  <path d="M438 168 Q437.6 163.6 440.6 162.6 Q439.6 155.6 446 153.6 Q450 152 453 154.6 Q457.6 153.4 460 156.6"/>
 </g>
 <use href="#plane"/>
</g>
<g id="plane2">
 <use href="#plane" transform="translate(279.4 5.2) rotate(3.4 307 166)"/>
 <!-- smoke -->
 <g fill="#6d6d6d" stroke="#555" stroke-width="0.7" stroke-linejoin="round">
  <path d="M672.4 170.1 C671.6 167.6 671.8 169.7 673.6 165.8 C675.5 161.8 675.9 162.9 678.0 158.3 C680.1 153.8 678.0 155.2 679.9 152.1 C681.7 149.0 681.3 148.6 683.6 149.0 C685.8 149.4 684.4 153.6 686.7 153.3 C688.9 153.1 687.7 152.1 690.4 148.4 C693.1 144.7 692.9 146.3 694.7 142.2 C696.6 138.0 694.3 139.9 696.0 136.0 C697.6 132.1 698.0 134.3 699.7 130.4 C701.4 126.5 699.5 126.7 700.9 124.2 C702.4 121.7 701.8 122.7 704.0 123.0 C706.3 123.2 706.5 125.6 707.8 124.8 C709.0 124.0 706.7 122.5 707.8 120.5 C708.8 118.4 709.4 117.8 710.9 118.6 C712.3 119.4 711.9 119.9 712.1 123.0 C712.3 126.1 711.1 125.0 711.5 127.9 C711.9 130.8 713.6 128.9 713.3 131.6 C713.1 134.3 710.5 132.9 710.9 136.0 C711.3 139.1 714.0 137.2 714.6 140.9 C715.2 144.7 714.6 144.0 712.7 147.1 C710.9 150.2 711.3 149.4 709.0 150.2 C706.7 151.1 708.6 148.4 705.9 149.6 C703.2 150.9 703.4 151.1 700.9 154.0 C698.5 156.9 699.5 154.8 698.5 158.3 C697.4 161.8 699.7 160.8 697.8 164.5 C696.0 168.2 696.2 167.0 692.9 169.5 C689.6 172.0 691.0 169.9 687.9 172.0 C684.8 174.0 686.3 174.4 683.6 175.7 C680.9 176.9 682.3 176.5 679.9 175.7 C677.4 174.9 678.6 175.1 676.1 173.2 C673.6 171.3 673.2 172.6 672.4 170.1 Z"/>
  <path d="M689.2 186.8 C690.2 184.0 688.7 184.0 691.0 181.9 C693.3 179.8 692.7 182.3 696.0 180.6 C699.3 179.0 698.0 179.0 700.9 176.9 C703.8 174.9 702.0 174.9 704.7 174.4 C707.4 174.0 706.3 176.5 709.0 175.7 C711.7 174.9 711.3 174.6 712.7 172.0 C714.2 169.3 711.9 170.1 713.3 167.6 C714.8 165.1 715.6 167.6 717.1 164.5 C718.5 161.4 716.0 160.8 717.7 158.3 C719.3 155.8 719.8 158.9 722.0 157.1 C724.3 155.2 722.7 154.0 724.5 152.7 C726.4 151.5 726.4 151.5 727.6 153.3 C728.9 155.2 727.6 155.4 728.2 158.3 C728.9 161.2 727.4 162.4 729.5 162.0 C731.5 161.6 731.1 159.6 734.4 157.1 C737.8 154.6 736.7 156.7 739.4 154.6 C742.1 152.5 741.7 153.1 742.5 150.9 C743.3 148.6 740.0 149.4 741.9 147.8 C743.7 146.1 745.8 149.0 748.1 145.9 C750.4 142.8 747.5 142.2 748.7 138.5 C750.0 134.7 748.7 136.4 751.8 134.7 C754.9 133.1 755.5 136.4 758.0 133.5 C760.5 130.6 757.6 129.6 759.3 126.1 C760.9 122.5 760.3 124.6 763.0 123.0 C765.7 121.3 764.8 120.9 767.3 121.1 C769.8 121.3 769.6 121.1 770.4 123.6 C771.2 126.1 768.6 126.9 769.8 128.5 C771.0 130.2 771.5 127.5 774.1 128.5 C776.8 129.6 776.4 128.7 777.9 131.6 C779.3 134.5 779.3 133.9 778.5 137.2 C777.7 140.5 777.7 140.3 775.4 141.6 C773.1 142.8 772.7 139.5 771.7 140.9 C770.6 142.4 773.5 142.6 772.3 145.9 C771.0 149.2 767.9 149.4 767.9 150.9 C767.9 152.3 769.4 149.8 772.3 150.2 C775.2 150.7 775.2 149.6 776.6 152.1 C778.1 154.6 777.7 154.4 776.6 157.7 C775.6 161.0 776.4 159.3 773.5 162.0 C770.6 164.7 771.0 164.9 767.9 165.8 C764.8 166.6 765.7 166.6 764.2 164.5 C762.8 162.4 765.3 162.2 763.6 159.6 C761.9 156.9 761.1 155.6 759.3 156.5 C757.4 157.3 760.5 159.8 758.0 162.0 C755.5 164.3 755.5 160.8 751.8 163.3 C748.1 165.8 749.3 164.9 746.8 169.5 C744.4 174.0 746.4 172.8 744.4 176.9 C742.3 181.1 743.5 179.0 740.6 181.9 C737.8 184.8 739.4 183.1 735.7 185.6 C732.0 188.1 733.2 188.9 729.5 189.3 C725.8 189.7 727.8 187.3 724.5 186.8 C721.2 186.4 722.9 186.0 719.6 188.1 C716.2 190.2 717.5 192.2 714.6 193.1 C711.7 193.9 713.8 190.8 710.9 190.6 C708.0 190.4 709.2 192.8 705.9 192.4 C702.6 192.0 704.7 190.0 700.9 189.3 C697.2 188.7 698.0 188.9 694.7 190.6 C691.4 192.2 693.7 192.6 691.0 194.3 C688.3 195.9 687.7 196.8 686.7 195.5 C685.6 194.3 687.1 193.5 687.9 190.6 C688.7 187.7 688.1 189.7 689.2 186.8 Z"/>
  <path d="M776.0 117.4 C778.3 115.7 779.1 115.1 781.0 116.1 C782.8 117.2 782.2 117.6 781.6 120.5 C781.0 123.4 781.4 123.4 779.1 124.8 C776.8 126.3 776.4 126.1 774.8 124.8 C773.1 123.6 773.7 123.6 774.1 121.1 C774.6 118.6 773.7 119.0 776.0 117.4 Z"/>
  <path d="M791.5 119.9 C794.2 118.6 796.3 117.6 798.3 119.2 C800.4 120.9 799.2 122.1 797.7 124.8 C796.3 127.5 797.1 126.7 794.0 127.3 C790.9 127.9 789.7 128.1 788.4 126.7 C787.2 125.2 789.2 125.2 790.3 123.0 C791.3 120.7 788.8 121.1 791.5 119.9 Z"/>
  <path d="M779.1 139.7 C781.2 137.2 783.0 136.0 785.3 138.5 C787.6 140.9 786.8 143.6 785.9 147.1 C785.1 150.7 785.1 149.4 782.8 149.0 C780.6 148.6 780.3 149.0 779.1 145.9 C777.9 142.8 777.0 142.2 779.1 139.7 Z"/>
  <path d="M717.7 118.6 C719.3 116.7 721.2 116.5 722.7 118.0 C724.1 119.4 723.7 121.1 722.0 123.0 C720.4 124.8 719.1 125.0 717.7 123.6 C716.2 122.1 716.0 120.5 717.7 118.6 Z"/>
  <path d="M714.0 131.6 C715.0 130.0 716.2 130.2 717.7 132.3 C719.1 134.3 719.3 136.2 718.3 137.8 C717.3 139.5 716.0 139.3 714.6 137.2 C713.1 135.2 712.9 133.3 714.0 131.6 Z"/>
  <ellipse cx="725.4" cy="128.9" rx="2.2" ry="1.8"/>
  <ellipse cx="799.0" cy="137.8" rx="3.0" ry="2.4"/>
  <ellipse cx="795.5" cy="108.1" rx="1.2" ry="2.0"/>
  <ellipse cx="718.7" cy="111.4" rx="0.9" ry="1.4"/>
  <ellipse cx="784.4" cy="128.8" rx="1.4" ry="2.2"/>
  <ellipse cx="784.7" cy="135.1" rx="2.6" ry="1.2"/>
  <ellipse cx="761.1" cy="121.1" rx="1.0" ry="1.6"/>
  <ellipse cx="715.2" cy="125.4" rx="1.2" ry="1.4"/>
 </g>
</g>

<!-- 22_buggy.svg -->
<g id="buggy" stroke="#111" stroke-width="0.8" stroke-linejoin="round" stroke-linecap="round">
 <!-- roll cage (light tubes) -->
 <g fill="none">
  <path d="M1085.5 156 L1101 120.6 Q1102 118.4 1104.4 118.8 L1146 122.6 Q1148.4 122.8 1148.8 125.2 L1152.4 145" stroke="#111" stroke-width="3.4"/>
  <path d="M1085.5 156 L1101 120.6 Q1102 118.4 1104.4 118.8 L1146 122.6 Q1148.4 122.8 1148.8 125.2 L1152.4 145" stroke="#c2cccc" stroke-width="1.8"/>
  <path d="M1110.6 120 L1114.2 156 M1142 123.4 L1132.4 144 M1110.8 124.4 L1141 128.6" stroke="#111" stroke-width="3.2"/>
  <path d="M1110.6 120 L1114.2 156 M1142 123.4 L1132.4 144 M1110.8 124.4 L1141 128.6" stroke="#b4c0c0" stroke-width="1.6"/>
 </g>
 <!-- rear frame -->
 <g fill="none">
  <path d="M1128 196 L1160 191 V197 M1130 201 H1155 M1154 199.6 L1143 212.6 M1089 192 L1130 196" stroke="#111" stroke-width="3.2"/>
  <path d="M1128 196 L1160 191 V197 M1130 201 H1155 M1154 199.6 L1143 212.6 M1089 192 L1130 196" stroke="#aeb9bb" stroke-width="1.6"/>
 </g>
 <path d="M1143 206 L1153 201 L1153.6 208 L1146 213 Z" fill="#7a5c44" stroke-width="0.6"/>
 <!-- hood / front -->
 <path d="M973 184 L986 180.4 L1011.7 180.3 L1026 187 L1024 194 L976 196 Z" fill="#3e4a34"/>
 <path d="M985 186 L998 183.6 L1003 187 L990 189.6 Z" fill="#67744e" stroke="none"/>
 <g fill="none" stroke="#161616" stroke-width="2.6"><path d="M973.8 182 Q975 170.6 981.4 170.6 Q987.6 170.8 987.6 181"/><path d="M987.6 181 Q989.4 172 994.6 172.2 Q1000 172.6 1001.4 180"/></g>
 <rect x="957.8" y="170.8" width="14.8" height="15.6" rx="3" fill="#2a2a2a"/>
 <rect x="960" y="173" width="8" height="11" rx="2" fill="#3b3b3b" stroke="none"/>
 <rect x="957" y="188.2" width="15.6" height="4.3" rx="2" fill="#3a3a3a"/>
 <rect x="953.5" y="193.9" width="17.3" height="4.7" rx="2.2" fill="#3a3a3a"/>
 <rect x="960" y="198.6" width="9" height="5.2" fill="#303030"/>
 <rect x="954.3" y="203.8" width="14.8" height="4.3" rx="2" fill="#3a3a3a"/>
 <!-- side camo panel -->
 <path d="M1027 192.4 L1050 194 V214.6 L1029 212.6 Z" fill="#4a5a3a" stroke-width="0.5"/>
 <path d="M1031 196 L1040 195 L1042 203 L1034 205 Z M1036 207 L1047 206 L1047 213 L1037 212.6 Z" fill="#c4cccc" stroke="none"/>
 <path d="M1041 195.4 L1049 196 L1048 203 L1043 202 Z" fill="#8a7a5c" stroke="none"/>
 <!-- seat, wheel, shocks -->
 <path d="M1073.4 170.4 L1079 169.4 L1081 186.8 H1066 Z" fill="#2a2a2a"/><path d="M1071 176 L1076 175 L1077.6 186.8 H1068.6 Z" fill="#3c3c3c" stroke="none"/>
 <ellipse cx="1038.8" cy="179.6" rx="3" ry="8" transform="rotate(-28 1038.8 179.6)" fill="#1c1c1c"/>
 <g fill="none" stroke="#141414"><path d="M1083.8 174.4 L1087.2 188.4" stroke-width="3.4" stroke-dasharray="1.2 0.8" stroke-linecap="butt"/><path d="M1095 175.2 L1102 191.8" stroke-width="4.6" stroke-dasharray="1.3 0.8" stroke-linecap="butt"/><path d="M1103 174.4 L1109.8 190" stroke-width="3"/></g>
 <!-- box -->
 <path d="M1050.6 186.6 L1084.6 189 L1083.8 216.8 L1049.9 214.2 Z" fill="#7a6a36"/>
 <path d="M1058 188 L1084.6 189 L1066 206 Z" fill="#8f7d42" stroke="none"/>
 <path d="M1066 206 L1084 192 L1083.8 216.8 L1076 216 Z" fill="#5f5228" stroke="none"/>
 <path d="M1084 190 L1068 204" fill="none" stroke-width="0.9"/>
 <rect x="1051" y="187.6" width="4.6" height="7.6" fill="#6a5c30" stroke-width="0.6"/>
 <!-- main frame: dark camo tubes -->
 <g fill="none">
  <path d="M1026.4 155.8 L1079.4 157 L1110 169.4 M1026.4 155.8 L1011.7 180.3 M1038.6 158 L1025.6 183.2 M1082.9 159.6 L1089 191.8" stroke="#111" stroke-width="4"/>
  <path d="M1026.4 155.8 L1079.4 157 L1110 169.4 M1026.4 155.8 L1011.7 180.3 M1038.6 158 L1025.6 183.2 M1082.9 159.6 L1089 191.8" stroke="#3c4832" stroke-width="2.4"/>
  <path d="M1044 156.2 L1052 156.4 M1062 156.6 L1070 156.8 M1090 161.4 L1098 164.6 M1020 166.4 L1016 173 M1033.6 167.6 L1030.6 173.4" stroke="#b9c4c2" stroke-width="2.2" stroke-linecap="butt"/>
  <path d="M1054 156.4 L1060 156.6" stroke="#8a6e54" stroke-width="2.2" stroke-linecap="butt"/>
  <path d="M1071.6 159.6 L1078.5 183 M1030 157.6 L1019 180 " stroke="#111" stroke-width="3.2"/>
  <path d="M1071.6 159.6 L1078.5 183 M1030 157.6 L1019 180" stroke="#b4c0c0" stroke-width="1.6"/>
  <!-- lower rails -->
  <path d="M1012 182 L1032 184.4 M1023 191.8 L1089 195.2 M1026.4 204 L1089 208.4 M1026.4 214.4 L1085.5 220.4 L1089 208.4 M1023 191.8 L1026.4 214.4" stroke="#111" stroke-width="3.4"/>
  <path d="M1012 182 L1032 184.4 M1023 191.8 L1089 195.2 M1026.4 204 L1089 208.4 M1026.4 214.4 L1085.5 220.4 L1089 208.4 M1023 191.8 L1026.4 214.4" stroke="#aab6b8" stroke-width="1.8"/>
 </g>
 <rect x="1031.6" y="142.1" width="10.4" height="10.8" rx="1.4" fill="#2b2b2b" transform="rotate(4 1036 148)"/>
 <!-- wheels -->
 <use href="#wheel" transform="translate(1139.3 167.3) rotate(-8) scale(26.9 26.2)" stroke-width="0.05"/>
 <use href="#wheel" transform="translate(997.2 206.1) scale(26.5)"/>
 <use href="#wheel" transform="translate(1114.5 218.6) scale(26.5)"/>
</g>

<!-- 23_helis.svg -->
<g id="heli1">
 <use href="#heli"/>
 <!-- rotor -->
 <g stroke-linecap="round" stroke-linejoin="round">
  <path d="M296.7 335.2 Q340 327.6 373.6 327 L373.6 328.6 Q340 329.6 296.7 335.2 Z" fill="#161616" stroke="#0e0e0e" stroke-width="0.8"/>
  <path d="M387.8 327 Q430 327.6 461.5 336 Q430 329.8 387.8 328.8 Z" fill="#161616" stroke="#0e0e0e" stroke-width="0.8"/>
  <path d="M347.7 333.2 L362 328.4" stroke="#0e0e0e" stroke-width="2" fill="none"/><path d="M348.6 332.9 L361 328.8" stroke="#77807f" stroke-width="0.8" fill="none"/>
  <path d="M392 329 Q410 335 424.8 345.4" stroke="#0e0e0e" stroke-width="2.6" fill="none"/><path d="M393 329.4 Q410 335.2 423.8 344.8" stroke="#b4c6c8" stroke-width="1.1" fill="none"/>
 </g>
 <!-- tail rotor -->
 <g transform="translate(501.1 341.9)">
  <g stroke="#444" stroke-opacity="0.35" stroke-width="5" stroke-linecap="round"><path d="M0 0 L-9.7 -14.2 M0 0 L15 -10.4 M0 0 L10.5 13.5 M0 0 L-11.9 9.8"/></g>
  <g stroke="#1a1a1a" stroke-width="3" stroke-linecap="round"><path d="M-2 -3 L-9.7 -14.2 M3 -2 L15 -10.4 M2 3 L10.5 13.5 M-3 2.4 L-11.9 9.8"/></g>
  <g stroke="#cfd9d9" stroke-width="1.5" stroke-linecap="round"><path d="M-2.4 -3.6 L-9.5 -13.9 M3.4 -2.4 L14.6 -10.1 M2.4 3.2 L10.2 13.1 M-3.4 2.8 L-11.5 9.5"/></g>
  <circle r="2.6" fill="#141414"/>
 </g>
</g>
<g id="heli2">
 <use href="#heli" transform="translate(218 171.6)"/>
 <g stroke-linecap="round" stroke-linejoin="round">
  <path d="M495.5 505.4 Q550 498.6 591.6 498.4 L591.6 500.2 Q550 500.8 495.5 505.4 Z" fill="#161616" stroke="#0e0e0e" stroke-width="0.8"/>
  <path d="M605.8 498.6 Q660 499 702.4 505.6 Q660 501.4 605.8 500.4 Z" fill="#161616" stroke="#0e0e0e" stroke-width="0.8"/>
  <path d="M533 504 L546 500.8" stroke="#0e0e0e" stroke-width="2" fill="none"/><path d="M534 503.7 L545 501" stroke="#77807f" stroke-width="0.8" fill="none"/>
  <path d="M636 500.6 Q650 502 664 505" stroke="#0e0e0e" stroke-width="2" fill="none"/><path d="M637 500.8 Q650 502.2 663 504.8" stroke="#77807f" stroke-width="0.8" fill="none"/>
 </g>
 <g transform="translate(720 512.6)">
  <g stroke="#444" stroke-opacity="0.35" stroke-width="5" stroke-linecap="round"><path d="M0 0 L6 -15.6 M0 0 L18 6 M0 0 L-17 -7"/></g>
  <g stroke="#1a1a1a" stroke-width="3" stroke-linecap="round"><path d="M1 -3 L6 -15.6 M3 1 L17 6 M-3 -1.4 L-15 -6.4"/></g>
  <g stroke="#cfd9d9" stroke-width="1.5" stroke-linecap="round"><path d="M1.4 -3.8 L5.8 -15.2 M3.8 1.4 L16.6 5.8 M-3.6 -1.6 L-14.6 -6.2"/></g>
  <circle r="2.6" fill="#141414"/>
 </g>
</g>

<!-- 24_jet.svg -->
<g id="jet" stroke="#0a0a0a" stroke-width="0.7" stroke-linejoin="round">
 <defs>
  <radialGradient id="noz" cx="0.5" cy="0.5" r="0.5"><stop offset="0" stop-color="#15181c"/><stop offset="0.66" stop-color="#15181c"/><stop offset="0.76" stop-color="#23527c"/><stop offset="0.92" stop-color="#23527c"/><stop offset="1" stop-color="#122c44"/></radialGradient>
  <radialGradient id="glow" cx="0.5" cy="0.5" r="0.5"><stop offset="0" stop-color="#b01c28"/><stop offset="0.5" stop-color="#8c1c26" stop-opacity="0.85"/><stop offset="1" stop-color="#5c1420" stop-opacity="0"/></radialGradient>
  <g id="jethalf">
   <!-- wing -->
   <path d="M539 376.6 L553.2 370 L589.2 368.2 V371.6 L553.6 371.2 L539.6 377 Z" fill="#0b0b0d" stroke-width="0.5"/>
   <path d="M571 370.2 L589 369.6 V370.4 L571 370.6 Z" fill="#b8b49c" stroke="none"/>
   <path d="M597 367 H627.4 V371.8 H597 Z" fill="#ecead8" stroke-width="0.9"/>
   <path d="M614 367.4 H627 V368.8 H614 Z" fill="#6c6c6c" stroke="none"/>
   <path d="M608.5 369.4 H613.5 V371 H608.5 Z" fill="#5a8ab8" stroke="none"/>
   <path d="M592 374.7 L627.4 373.4 V376.6 Z" fill="#0b0b0d" stroke-width="0.5"/>
   <rect x="588.9" y="365.1" width="8.4" height="7.8" rx="2.2" fill="#3a3a3e" stroke-width="0.7"/><rect x="590.9" y="367.5" width="4.4" height="3.6" rx="0.6" fill="#f0ecd8" stroke="none"/>
   <!-- tail & lower fin -->
   <path d="M617.2 323.3 L630.4 361 L633.4 359.6 Z" fill="#0b0b0d" stroke-width="0.5"/>
   <path d="M630.6 383 L634.2 383.6 L627.3 394.8 Z M631 383.6 L624.6 385.2 L630 381.6 Z" fill="#0b0b0d"/>
   <!-- engine -->
   <path d="M639 358.2 H653 L660 362.4 V383.6 L656.6 387.9 H639.6 L634.9 383.2 V362.4 Z" fill="#0c0c10"/>
   <circle cx="647.4" cy="372.8" r="11" fill="url(#noz)" stroke-width="0.6"/>
   <circle cx="647.4" cy="372.8" r="8.8" fill="none" stroke="#3c84bc" stroke-width="0.8" stroke-dasharray="0.7 1.3"/>
   <circle cx="645.6" cy="371.6" r="4.6" fill="#48484a" stroke="none"/>
   <ellipse cx="646.6" cy="375.6" rx="6.2" ry="4.8" fill="url(#glow)" stroke="none"/>
   <path d="M644 375.2 Q646.6 378 650 377" fill="none" stroke="#0a0a0a" stroke-width="0.9"/>
   <!-- yellow -->
   <rect x="627.3" y="361.8" width="7.2" height="9.4" rx="3" fill="#f0b818" stroke-width="0.9"/><rect x="627.3" y="372.8" width="7.2" height="9.4" rx="3" fill="#f0b818" stroke-width="0.9"/>
   <path d="M629 364 V369 M629 375 V380" stroke="#ffe070" stroke-width="1" fill="none"/>
  </g>
 </defs>
 <!-- canopy -->
 <circle cx="671.4" cy="349.6" r="12.3" fill="#1c3044" stroke-width="0.8"/>
 <path d="M660.2 353.6 A11.6 11.6 0 1 1 682.6 353.6" fill="none" stroke="#a8e2e6" stroke-width="1.3"/>
 <path d="M654.2 362 L666 353 L671.4 350.6 L676.8 353 L688.6 362 V366 H654.2 Z" fill="#22364a"/>
 <path d="M671.4 332.7 L672.8 342.4 L672.6 362 H670.2 L670 342.4 Z" fill="#0b0b0d"/>
 <path d="M670.8 351.6 H672.2 V361.6 H670.8 Z" fill="#e8e4c8" stroke-width="0.4"/>
 <!-- center -->
 <path d="M659.9 377 H683 V381.4 Q671.4 387.4 659.9 381.4 Z" fill="#3a78a8" stroke-width="0.6"/>
 <rect x="661.5" y="363.4" width="19.8" height="15.2" fill="#5a5a62"/>
 <path d="M667.6 364.8 H675.2 L678 367.8 V374.6 L675.2 377.6 H667.6 L664.8 374.6 V367.8 Z" fill="#26262a"/>
 <path d="M668.8 367.4 H674 L675.4 369 V373.4 L674 375 H668.8 L667.4 373.4 V369 Z" fill="#3e3e40" stroke-width="0.4"/>
 <path d="M661.5 362.6 H667 M675.8 362.6 H681.3" stroke="#3a78a8" stroke-width="1.4"/>
 <use href="#jethalf"/>
 <use href="#jethalf" transform="translate(1342.8 0) scale(-1 1)"/>
</g>

<!-- 25_shards.svg -->
<g id="shards">
<defs><radialGradient id="sg1" cx="0.5" cy="0.5" r="0.5"><stop offset="0" stop-color="#78c8ec" stop-opacity="0.85"/><stop offset="0.4" stop-color="#84cae8" stop-opacity="0.72"/><stop offset="0.68" stop-color="#98cee2" stop-opacity="0.46"/><stop offset="0.86" stop-color="#b0ccd6" stop-opacity="0.18"/><stop offset="1" stop-color="#cccccc" stop-opacity="0"/></radialGradient>
<filter id="sblur" x="-30%" y="-30%" width="160%" height="160%"><feGaussianBlur stdDeviation="4.5"/></filter>
<filter id="sblur2" x="-30%" y="-30%" width="160%" height="160%"><feGaussianBlur stdDeviation="9"/></filter></defs>
<ellipse cx="982" cy="362" rx="116" ry="82" fill="url(#sg1)" transform="rotate(8 982 362)"/>
<g fill="#40b4ec" stroke="#40b4ec" stroke-width="9" stroke-linejoin="round" filter="url(#sblur2)" opacity="0.55">
<path d="M1015.0 341.1 L1036.0 329.8 L1042.4 337.9 L1042.4 353.2 L1047.3 371.0 L1040.0 383.1 L1018.2 371.8 Z"/>
<path d="M978.7 324.2 L996.5 313.7 L1016.6 310.0 L995.6 325.0 Z"/>
<path d="M973.1 325.0 L983.5 327.4 L984.4 337.1 L987.6 346.0 L977.9 341.9 L975.5 334.7 Z"/>
<path d="M1019.0 322.6 L1027.1 319.0 L1031.9 329.0 L1026.3 327.4 Z"/>
<path d="M935.2 324.2 L956.9 316.1 L944.8 321.8 Z"/>
<path d="M900.5 354.0 L922.3 344.4 L915.8 353.2 L914.2 368.5 L905.3 371.0 L902.9 365.3 L905.3 359.7 Z"/>
<path d="M942.4 355.6 L953.7 366.1 L954.5 375.0 L958.5 377.4 L957.7 382.3 L952.1 379.0 L940.0 379.8 L937.6 367.7 Z"/>
<path d="M968.7 366.9 L972.3 366.9 L973.5 372.6 L971.5 377.1 L968.7 375.8 Z"/>
<path d="M987.6 358.1 L1001.3 356.5 L1004.5 383.9 L999.7 379.0 L996.5 377.4 L995.6 366.1 Z"/>
<path d="M983.5 382.6 L996.5 381.9 L1001.3 386.3 L988.4 386.3 Z"/>
<path d="M1004.5 385.5 L1016.6 391.9 L1016.6 400.0 L1006.9 396.0 Z"/>
<path d="M927.1 390.3 L930.3 400.0 L943.2 403.2 L944.8 408.1 L957.7 415.3 L940.0 411.3 L927.9 404.0 Z"/>
<path d="M962.6 407.3 L977.9 407.3 L1001.3 416.9 L980.3 413.7 Z"/>
<ellipse cx="1045.3" cy="327.4" rx="2.6" ry="3.8" transform="rotate(-15 1045.3 327.4)"/>
<ellipse cx="1066.6" cy="368.2" rx="2.8" ry="4.2" transform="rotate(-15 1066.6 368.2)"/>
<ellipse cx="1024.7" cy="397.3" rx="2.6" ry="3.6" transform="rotate(-15 1024.7 397.3)"/>
<ellipse cx="1052.6" cy="419.7" rx="2.4" ry="3.6" transform="rotate(-15 1052.6 419.7)"/>
<circle cx="994.5" cy="410.2" r="1.4"/>
<circle cx="916.3" cy="377.9" r="1.2"/>
</g>
<g fill="#2cb0f0" stroke="#2cb0f0" stroke-width="5" stroke-linejoin="round" filter="url(#sblur)" opacity="0.8">
<path d="M1015.0 341.1 L1036.0 329.8 L1042.4 337.9 L1042.4 353.2 L1047.3 371.0 L1040.0 383.1 L1018.2 371.8 Z"/>
<path d="M978.7 324.2 L996.5 313.7 L1016.6 310.0 L995.6 325.0 Z"/>
<path d="M973.1 325.0 L983.5 327.4 L984.4 337.1 L987.6 346.0 L977.9 341.9 L975.5 334.7 Z"/>
<path d="M1019.0 322.6 L1027.1 319.0 L1031.9 329.0 L1026.3 327.4 Z"/>
<path d="M935.2 324.2 L956.9 316.1 L944.8 321.8 Z"/>
<path d="M900.5 354.0 L922.3 344.4 L915.8 353.2 L914.2 368.5 L905.3 371.0 L902.9 365.3 L905.3 359.7 Z"/>
<path d="M942.4 355.6 L953.7 366.1 L954.5 375.0 L958.5 377.4 L957.7 382.3 L952.1 379.0 L940.0 379.8 L937.6 367.7 Z"/>
<path d="M968.7 366.9 L972.3 366.9 L973.5 372.6 L971.5 377.1 L968.7 375.8 Z"/>
<path d="M987.6 358.1 L1001.3 356.5 L1004.5 383.9 L999.7 379.0 L996.5 377.4 L995.6 366.1 Z"/>
<path d="M983.5 382.6 L996.5 381.9 L1001.3 386.3 L988.4 386.3 Z"/>
<path d="M1004.5 385.5 L1016.6 391.9 L1016.6 400.0 L1006.9 396.0 Z"/>
<path d="M927.1 390.3 L930.3 400.0 L943.2 403.2 L944.8 408.1 L957.7 415.3 L940.0 411.3 L927.9 404.0 Z"/>
<path d="M962.6 407.3 L977.9 407.3 L1001.3 416.9 L980.3 413.7 Z"/>
<ellipse cx="1045.3" cy="327.4" rx="2.6" ry="3.8" transform="rotate(-15 1045.3 327.4)"/>
<ellipse cx="1066.6" cy="368.2" rx="2.8" ry="4.2" transform="rotate(-15 1066.6 368.2)"/>
<ellipse cx="1024.7" cy="397.3" rx="2.6" ry="3.6" transform="rotate(-15 1024.7 397.3)"/>
<ellipse cx="1052.6" cy="419.7" rx="2.4" ry="3.6" transform="rotate(-15 1052.6 419.7)"/>
<circle cx="994.5" cy="410.2" r="1.4"/>
<circle cx="916.3" cy="377.9" r="1.2"/>
</g>
<g fill="#1aa4e4" stroke="#1aa4e4" stroke-width="3.2" stroke-linejoin="round" transform="translate(-0.9 -0.9)">
<path d="M1015.0 341.1 L1036.0 329.8 L1042.4 337.9 L1042.4 353.2 L1047.3 371.0 L1040.0 383.1 L1018.2 371.8 Z"/>
<path d="M978.7 324.2 L996.5 313.7 L1016.6 310.0 L995.6 325.0 Z"/>
<path d="M973.1 325.0 L983.5 327.4 L984.4 337.1 L987.6 346.0 L977.9 341.9 L975.5 334.7 Z"/>
<path d="M1019.0 322.6 L1027.1 319.0 L1031.9 329.0 L1026.3 327.4 Z"/>
<path d="M935.2 324.2 L956.9 316.1 L944.8 321.8 Z"/>
<path d="M900.5 354.0 L922.3 344.4 L915.8 353.2 L914.2 368.5 L905.3 371.0 L902.9 365.3 L905.3 359.7 Z"/>
<path d="M942.4 355.6 L953.7 366.1 L954.5 375.0 L958.5 377.4 L957.7 382.3 L952.1 379.0 L940.0 379.8 L937.6 367.7 Z"/>
<path d="M968.7 366.9 L972.3 366.9 L973.5 372.6 L971.5 377.1 L968.7 375.8 Z"/>
<path d="M987.6 358.1 L1001.3 356.5 L1004.5 383.9 L999.7 379.0 L996.5 377.4 L995.6 366.1 Z"/>
<path d="M983.5 382.6 L996.5 381.9 L1001.3 386.3 L988.4 386.3 Z"/>
<path d="M1004.5 385.5 L1016.6 391.9 L1016.6 400.0 L1006.9 396.0 Z"/>
<path d="M927.1 390.3 L930.3 400.0 L943.2 403.2 L944.8 408.1 L957.7 415.3 L940.0 411.3 L927.9 404.0 Z"/>
<path d="M962.6 407.3 L977.9 407.3 L1001.3 416.9 L980.3 413.7 Z"/>
<ellipse cx="1045.3" cy="327.4" rx="2.6" ry="3.8" transform="rotate(-15 1045.3 327.4)"/>
<ellipse cx="1066.6" cy="368.2" rx="2.8" ry="4.2" transform="rotate(-15 1066.6 368.2)"/>
<ellipse cx="1024.7" cy="397.3" rx="2.6" ry="3.6" transform="rotate(-15 1024.7 397.3)"/>
<ellipse cx="1052.6" cy="419.7" rx="2.4" ry="3.6" transform="rotate(-15 1052.6 419.7)"/>
<circle cx="994.5" cy="410.2" r="1.4"/>
<circle cx="916.3" cy="377.9" r="1.2"/>
</g>
<g stroke="#14181c" stroke-width="0.5" stroke-linejoin="round">
<path d="M1015.0 341.1 L1036.0 329.8 L1042.4 337.9 L1042.4 353.2 L1047.3 371.0 L1040.0 383.1 L1018.2 371.8 Z" fill="#c6dace"/>
<path d="M978.7 324.2 L996.5 313.7 L1016.6 310.0 L995.6 325.0 Z" fill="#c6d6ca"/>
<path d="M973.1 325.0 L983.5 327.4 L984.4 337.1 L987.6 346.0 L977.9 341.9 L975.5 334.7 Z" fill="#6c6e7e"/>
<path d="M1019.0 322.6 L1027.1 319.0 L1031.9 329.0 L1026.3 327.4 Z" fill="#6c6e7e"/>
<path d="M935.2 324.2 L956.9 316.1 L944.8 321.8 Z" fill="#c0bca8"/>
<path d="M900.5 354.0 L922.3 344.4 L915.8 353.2 L914.2 368.5 L905.3 371.0 L902.9 365.3 L905.3 359.7 Z" fill="#9c9684"/>
<path d="M942.4 355.6 L953.7 366.1 L954.5 375.0 L958.5 377.4 L957.7 382.3 L952.1 379.0 L940.0 379.8 L937.6 367.7 Z" fill="#8c8e7e"/>
<path d="M968.7 366.9 L972.3 366.9 L973.5 372.6 L971.5 377.1 L968.7 375.8 Z" fill="#ffffff"/>
<path d="M987.6 358.1 L1001.3 356.5 L1004.5 383.9 L999.7 379.0 L996.5 377.4 L995.6 366.1 Z" fill="#8c9486"/>
<path d="M983.5 382.6 L996.5 381.9 L1001.3 386.3 L988.4 386.3 Z" fill="#a4ac9c"/>
<path d="M1004.5 385.5 L1016.6 391.9 L1016.6 400.0 L1006.9 396.0 Z" fill="#6c6e7e"/>
<path d="M927.1 390.3 L930.3 400.0 L943.2 403.2 L944.8 408.1 L957.7 415.3 L940.0 411.3 L927.9 404.0 Z" fill="#8c8878"/>
<path d="M962.6 407.3 L977.9 407.3 L1001.3 416.9 L980.3 413.7 Z" fill="#7c7e6e"/>
<path d="M1027.1 353.2 L1038.4 346.0 L1039.2 371.0 L1036.8 375.8 L1027.1 371.0 Z" fill="#d6e6de" stroke="none"/>
<path d="M1039.2 371.0 L1042.4 353.2 L1047.3 371.0 L1040.0 383.1 L1036.8 375.8 Z" fill="#b4cabc" stroke="none"/>
<path d="M1019.0 353.2 L1022.3 352.4 L1023.5 362.9 L1020.3 362.1 Z" fill="#ffffff" stroke="#14181c" stroke-width="0.5"/>
<path d="M901.0 353.7 L922.3 344.5 L916.6 351.9 L907.7 354.0 Z" fill="#c8c4b0" stroke="none"/>
<path d="M927.4 390.6 L930.3 399.7 L936.8 401.6 L932.3 396.8 Z" fill="#c8c4b0" stroke="none"/>
<path d="M945.6 363.7 L950.5 369.4 L948.4 377.4 L944.0 375.8 L941.9 369.4 Z" fill="#20242c"/>
<path d="M944.8 368.5 L948.4 368.5 L947.7 371.0 L945.5 371.0 Z" fill="#e0b040" stroke="none"/>
<path d="M944.5 371.8 L946.8 372.6 L946.1 376.1 L944.2 374.5 Z" fill="#8cd0e0" stroke="none"/>
<ellipse cx="1045.3" cy="327.4" rx="2.6" ry="3.8" fill="#7c7e8e" stroke="none" transform="rotate(-15 1045.3 327.4)"/>
<ellipse cx="1066.6" cy="368.2" rx="2.8" ry="4.2" fill="#7c7e8e" stroke="none" transform="rotate(-15 1066.6 368.2)"/>
<ellipse cx="1024.7" cy="397.3" rx="2.6" ry="3.6" fill="#7c7e8e" stroke="none" transform="rotate(-15 1024.7 397.3)"/>
<ellipse cx="1052.6" cy="419.7" rx="2.4" ry="3.6" fill="#7c7e8e" stroke="none" transform="rotate(-15 1052.6 419.7)"/>
<circle cx="994.5" cy="410.2" r="1.4" fill="#5a5c6c" stroke="none"/>
<circle cx="916.3" cy="377.9" r="1.2" fill="#5a5c6c" stroke="none"/>
</g></g>
<!-- 26_radartruck.svg -->
<g id="radartruck" stroke="#0c0c0c" stroke-width="0.8" stroke-linejoin="round">
<g fill="none" stroke="#f2f2f2" stroke-width="0.8"><ellipse cx="471.4" cy="487.6" rx="13.2" ry="16.4" transform="rotate(-18 471.4 487.6)"/><ellipse cx="456.3" cy="497.7" rx="9.3" ry="10.8" transform="rotate(-10 456.3 497.7)"/><ellipse cx="445.4" cy="504.1" rx="4.4" ry="5.2"/></g>
<ellipse cx="420.6" cy="522.6" rx="31" ry="20.5" transform="rotate(40 420.6 522.6)" fill="#6c7c68"/>
<ellipse cx="427.6" cy="520.2" rx="31" ry="20.5" transform="rotate(40 427.6 520.2)" fill="#929e8e"/>
<path d="M410.3 546.6 L421.6 544.0 L434.6 545.2 L434.6 553.6 L410.3 553.6 Z" fill="#7c9470"/>
<path d="M421.6 545.2 L434.6 545.2 L434.6 553.6 L421.6 553.6 Z" fill="#3c4c36" stroke-width="0.5"/>
<path d="M408.5 553.6 L437.2 553.6 L437.2 555.7 L408.5 555.7 Z" fill="#2c3828"/>
<path d="M409.1 514.5 L409.1 557.9" fill="none" stroke="#0c0c0c" stroke-width="2.6"/>
<path d="M402.8 517.1 L402.8 513.6 L414.6 510.8 L415.3 515.4" fill="none" stroke="#0c0c0c" stroke-width="3.2" stroke-linecap="round"/>
<path d="M402.8 517.1 L402.8 513.6 L414.6 510.8 L415.3 515.4" fill="none" stroke="#6c8462" stroke-width="1.4" stroke-linecap="round"/>
<path d="M404.2 497.1 L406.8 512.8" fill="none" stroke="#0c0c0c" stroke-width="2.6"/>
<path d="M404.2 497.1 L406.8 512.8" fill="none" stroke="#5c7452" stroke-width="1.1"/>
<path d="M408.5 497.1 L411.1 511.9" fill="none" stroke="#0c0c0c" stroke-width="2.6"/>
<path d="M408.5 497.1 L411.1 511.9" fill="none" stroke="#5c7452" stroke-width="1.1"/>
<ellipse cx="411.4" cy="482.4" rx="12" ry="12.8" fill="#3c4c36"/>
<ellipse cx="409.6" cy="482.4" rx="10.6" ry="12.4" fill="#5c7452"/>
<path d="M399.0 482.4 L420.2 482.4 M400.4 476.2 L418.7 488.6 M404.3 471.6 L414.9 493.1 M409.6 470.0 L409.6 494.8 M414.9 471.6 L404.3 493.1 M418.7 476.2 L400.4 488.6" fill="none" stroke="#1c2818" stroke-width="0.6"/>
<ellipse cx="409.6" cy="482.4" rx="5.6" ry="6.6" fill="none" stroke="#1c2818" stroke-width="0.6"/>
<path d="M404.2 555.3 L453.7 555.3 L464.1 559.7 L474.5 570.9 L476.8 581.0 L472.8 578.8 L470.2 569.2 L456.3 564.3 L404.2 564.3 Z" fill="#3a4a32"/>
<path d="M411.1 558.4 L459.8 558.8 L462.4 560.9 L411.1 560.5 Z" fill="#6c8462" stroke-width="0.5"/>
<path d="M407.7 555.3 L453.7 555.3 L459.8 558.4 L411.1 558.1 Z" fill="#526848" stroke-width="0.5"/>
<path d="M386.0 553.2 L407.7 553.2 L407.7 559.1 L386.0 559.1 Z" fill="#0c0c0c"/>
<path d="M386.5 554.1 L407.0 554.1 L407.0 555.3 L386.5 555.3 Z" fill="#2c3828" stroke="none"/>
<path d="M386.8 561.4 L404.2 561.4 L404.2 575.5 L386.8 575.5 Z" fill="#4e6444"/>
<path d="M386.8 561.4 L404.2 575.5 M404.2 561.4 L386.8 575.5" fill="none" stroke-width="0.7"/>
<path d="M404.2 564.3 L411.1 564.3 L411.1 569.2 L404.2 569.2 Z" fill="#2c3828"/>
<path d="M376.4 536.2 L384.8 535.9 L384.8 574.4 L376.4 574.4 Z" fill="#3c4c36"/>
<path d="M377.6 537.2 L383.0 537.2 L383.0 573.5 L377.6 573.5 Z" fill="#5c7452" stroke-width="0.5"/>
<path d="M377.6 543.2 L383.0 543.2 M377.6 549.2 L383.0 549.2 M377.6 555.3 L383.0 555.3 M377.6 561.4 L383.0 561.4 M377.6 567.5 L383.0 567.5" fill="none" stroke-width="0.7"/>
<path d="M340.8 546.6 L345.5 545.2 L350.4 532.7 L352.1 532.0 L371.6 532.0 L374.7 536.2 L375.0 574.8 L350.4 574.8 L346.5 566.6 L340.8 562.3 Z" fill="#6a8260"/>
<path d="M341.7 547.0 L369.5 547.0 L369.5 550.4 L341.7 550.4 Z" fill="#8aa07c" stroke="none"/>
<path d="M370.2 533.6 L374.3 536.6 L374.7 574.4 L370.2 574.4 Z" fill="#4a5c42" stroke="none"/>
<path d="M353.0 535.3 L367.4 535.3 L367.4 544.9 L353.0 544.9 Z" fill="#c8eef4"/>
<path d="M358.2 535.9 L361.1 535.9 L359.0 544.5 L356.1 544.5 Z" fill="#f4ffff" stroke="none"/>
<path d="M350.2 535.9 L351.8 535.9 L349.7 544.9 L347.2 544.9 Z" fill="#c8eef4"/>
<path d="M350.4 546.6 L350.4 573.5 M369.5 546.6 L369.5 574.1 M340.8 546.6 L374.7 546.6" fill="none" stroke-width="0.7"/>
<path d="M355.6 553.6 L362.2 553.6 L362.2 564.3 L355.6 564.3 Z" fill="#4a5c42" stroke-width="0.6"/>
<path d="M360.8 550.1 L368.1 549.8 L368.1 551.5 L360.8 551.5 Z" fill="#1c1c1c" stroke-width="0.5"/>
<path d="M351.8 568.5 L368.1 568.5 L368.1 576.1 L351.8 576.1 Z" fill="#2c3828" stroke-width="0.5"/>
<path d="M352.1 570.9 L367.7 570.9 M352.1 573.4 L367.7 573.4" fill="none" stroke="#6a8260" stroke-width="0.6"/>
<path d="M343.4 538.8 L345.2 537.6 L345.8 545.2 L344.1 545.9 Z" fill="#2a2a2a" stroke-width="0.5"/>
<path d="M316.5 551.8 L340.8 546.3 L341.3 562.3 L346.5 567.5 L350.4 574.8 L348.6 576.1 L339.1 564.0 L326.1 563.1 L322.6 567.5 L322.2 576.1 L311.3 576.1 L311.3 559.7 L310.4 558.8 L310.4 556.7 L316.0 556.7 Z" fill="#5c7452"/>
<path d="M317.0 551.5 L340.8 546.6 L341.0 552.7 L317.4 553.9 Z" fill="#7c9470" stroke-width="0.5"/>
<path d="M322.6 553.9 L340.3 553.2 L340.3 556.7 L322.6 556.7 Z" fill="#2c3828" stroke-width="0.5"/>
<path d="M324.3 555.1 L339.6 554.8" fill="none" stroke="#8aa07c" stroke-width="0.7" stroke-dasharray="0.8 1.2"/>
<path d="M310.1 556.7 L341.7 556.4 L341.7 558.8 L310.1 559.0 Z" fill="#0c0c0c"/>
<path d="M311.5 559.7 L322.2 559.7 L322.2 566.6 L319.1 576.1 L311.5 576.1 Z" fill="#8aa07c" stroke-width="0.5"/>
<ellipse cx="317.0" cy="555.0" rx="1.2" ry="1.8" fill="#f0a020" stroke-width="0.4"/>
<ellipse cx="313.5" cy="563.5" rx="1" ry="2.2" fill="#f0a020" stroke-width="0.4"/>
<path d="M322.2 576.1 L322.6 568.3 L327.8 563.6 L339.1 563.6 L345.5 568.3 L350.0 576.1 L352.1 576.1 L347.2 566.6 L340.3 561.4 L326.1 561.4 L320.5 566.6 L319.5 576.1 Z" fill="#3a4a32"/>
<use href="#wheel" transform="translate(334.2 580.0) scale(16.9)"/>
<use href="#wheel" transform="translate(422.1 580.0) scale(16.9)"/>
<use href="#wheel" transform="translate(456.0 580.0) scale(16.9)"/>
</g>
<!-- 27_rockettruck.svg -->
<g id="rockettruck" stroke="#0c0c0c" stroke-width="0.9" stroke-linejoin="round">
<g transform="translate(783.5 576.9) scale(1.326) translate(-334.2 -580)" stroke-width="0.7">
<path d="M404.2 555.3 L453.7 555.3 L464.1 559.7 L474.5 570.9 L476.8 581.0 L472.8 578.8 L470.2 569.2 L456.3 564.3 L404.2 564.3 Z" fill="#5a4634"/>
<path d="M411.1 558.4 L459.8 558.8 L462.4 560.9 L411.1 560.5 Z" fill="#c4a484" stroke-width="0.5"/>
<path d="M407.7 555.3 L453.7 555.3 L459.8 558.4 L411.1 558.1 Z" fill="#8a7056" stroke-width="0.5"/>
<path d="M386.0 553.2 L407.7 553.2 L407.7 559.1 L386.0 559.1 Z" fill="#0c0c0c"/>
<path d="M386.5 554.1 L407.0 554.1 L407.0 555.3 L386.5 555.3 Z" fill="#3c2e24" stroke="none"/>
<path d="M386.8 561.4 L404.2 561.4 L404.2 575.5 L386.8 575.5 Z" fill="#8a7056"/>
<path d="M386.8 561.4 L404.2 575.5 M404.2 561.4 L386.8 575.5" fill="none" stroke-width="0.7"/>
<path d="M404.2 564.3 L411.1 564.3 L411.1 569.2 L404.2 569.2 Z" fill="#3c2e24"/>
<path d="M376.4 536.2 L384.8 535.9 L384.8 574.4 L376.4 574.4 Z" fill="#4a3a2c"/>
<path d="M377.6 537.2 L383.0 537.2 L383.0 573.5 L377.6 573.5 Z" fill="#7a624a" stroke-width="0.5"/>
<path d="M377.6 543.2 L383.0 543.2 M377.6 549.2 L383.0 549.2 M377.6 555.3 L383.0 555.3 M377.6 561.4 L383.0 561.4 M377.6 567.5 L383.0 567.5" fill="none" stroke-width="0.7"/>
<path d="M340.8 546.6 L345.5 545.2 L350.4 532.7 L352.1 532.0 L371.6 532.0 L374.7 536.2 L375.0 574.8 L350.4 574.8 L346.5 566.6 L340.8 562.3 Z" fill="#b89a7c"/>
<path d="M341.7 547.0 L369.5 547.0 L369.5 550.4 L341.7 550.4 Z" fill="#d2b696" stroke="none"/>
<path d="M370.2 533.6 L374.3 536.6 L374.7 574.4 L370.2 574.4 Z" fill="#8a7056" stroke="none"/>
<path d="M353.0 535.3 L367.4 535.3 L367.4 544.9 L353.0 544.9 Z" fill="#c8eef4"/>
<path d="M358.2 535.9 L361.1 535.9 L359.0 544.5 L356.1 544.5 Z" fill="#f4ffff" stroke="none"/>
<path d="M350.2 535.9 L351.8 535.9 L349.7 544.9 L347.2 544.9 Z" fill="#c8eef4"/>
<path d="M350.4 546.6 L350.4 573.5 M369.5 546.6 L369.5 574.1 M340.8 546.6 L374.7 546.6" fill="none" stroke-width="0.7"/>
<path d="M355.6 553.6 L362.2 553.6 L362.2 564.3 L355.6 564.3 Z" fill="#6a5440" stroke-width="0.6"/>
<path d="M360.8 550.1 L368.1 549.8 L368.1 551.5 L360.8 551.5 Z" fill="#1c1c1c" stroke-width="0.5"/>
<path d="M351.8 568.5 L368.1 568.5 L368.1 576.1 L351.8 576.1 Z" fill="#3c2e24" stroke-width="0.5"/>
<path d="M352.1 570.9 L367.7 570.9 M352.1 573.4 L367.7 573.4" fill="none" stroke="#b89a7c" stroke-width="0.6"/>
<path d="M343.4 538.8 L345.2 537.6 L345.8 545.2 L344.1 545.9 Z" fill="#2a2a2a" stroke-width="0.5"/>
<path d="M316.5 551.8 L340.8 546.3 L341.3 562.3 L346.5 567.5 L350.4 574.8 L348.6 576.1 L339.1 564.0 L326.1 563.1 L322.6 567.5 L322.2 576.1 L311.3 576.1 L311.3 559.7 L310.4 558.8 L310.4 556.7 L316.0 556.7 Z" fill="#a08466"/>
<path d="M317.0 551.5 L340.8 546.6 L341.0 552.7 L317.4 553.9 Z" fill="#c0a282" stroke-width="0.5"/>
<path d="M322.6 553.9 L340.3 553.2 L340.3 556.7 L322.6 556.7 Z" fill="#3c2e24" stroke-width="0.5"/>
<path d="M324.3 555.1 L339.6 554.8" fill="none" stroke="#d2b696" stroke-width="0.7" stroke-dasharray="0.8 1.2"/>
<path d="M310.1 556.7 L341.7 556.4 L341.7 558.8 L310.1 559.0 Z" fill="#7a624a"/>
<path d="M311.5 559.7 L322.2 559.7 L322.2 566.6 L319.1 576.1 L311.5 576.1 Z" fill="#d2b696" stroke-width="0.5"/>
<ellipse cx="317.0" cy="555.0" rx="1.2" ry="1.8" fill="#f0a020" stroke-width="0.4"/>
<ellipse cx="313.5" cy="563.5" rx="1" ry="2.2" fill="#f0a020" stroke-width="0.4"/>
<path d="M322.2 576.1 L322.6 568.3 L327.8 563.6 L339.1 563.6 L345.5 568.3 L350.0 576.1 L352.1 576.1 L347.2 566.6 L340.3 561.4 L326.1 561.4 L320.5 566.6 L319.5 576.1 Z" fill="#5a4634"/>
<use href="#wheel" transform="translate(334.2 580.0) scale(16.9)"/>
<use href="#wheel" transform="translate(422.1 580.0) scale(16.9)"/>
<use href="#wheel" transform="translate(456.0 580.0) scale(16.9)"/>
</g>
<path d="M900.1 536.6 L915.6 534.6 L942.8 540.8 L942.8 547.0 L898.2 547.0 L898.2 540.8 Z" fill="#333"/>
<path d="M901.7 537.1 L914.8 535.5 L913.3 540.8 L900.1 540.8 Z" fill="#444" stroke="none"/>
<path d="M896.2 523.7 L902.0 522.7 L945.4 538.2 L943.9 542.4 L915.6 533.5 L900.1 531.2 L899.3 527.3 Z" fill="#a08868"/>
<path d="M945.4 537.7 L960.9 535.8 L961.4 542.0 L956.0 545.9 L946.6 545.1 Z" fill="#7a624a"/>
<circle cx="955.2" cy="543.6" r="1.8" fill="#222"/>
<path d="M881.5 491.6 L907.1 499.9 L902.0 523.1 L873.7 513.3 Z" fill="#353838"/>
<path d="M880.4 494.7 L906.4 503.1" fill="none" stroke="#68706e" stroke-width="1.3"/>
<path d="M878.9 499.0 L905.4 507.8" fill="none" stroke="#68706e" stroke-width="1.3"/>
<path d="M877.3 503.4 L904.3 512.4" fill="none" stroke="#68706e" stroke-width="1.3"/>
<path d="M875.8 507.7 L903.3 517.1" fill="none" stroke="#68706e" stroke-width="1.3"/>
<path d="M906.3 498.3 L972.2 520.6 L968.4 536.6 L945.1 538.2 L901.7 523.1 Z" fill="#6a5440"/>
<path d="M906.6 498.9 L971.8 520.9 L971.2 523.7 L906.0 501.4 Z" fill="#8a7258" stroke="none"/>
<path d="M902.9 518.8 L968.4 533.5 L968.0 536.2 L945.1 537.7 L902.0 522.8 Z" fill="#4a3a2c" stroke="none"/>
<path d="M909.7 503.6 L964.5 521.6" fill="none" stroke="#0c0c0c" stroke-width="3.4" stroke-linecap="round"/>
<path d="M909.7 503.6 L964.5 521.6" fill="none" stroke="#6e7876" stroke-width="1.8" stroke-linecap="round"/>
<circle cx="964.5" cy="521.6" r="1.5" fill="#2a2a2a" stroke-width="0.5"/>
<circle cx="909.7" cy="503.6" r="1.5" fill="#2a2a2a" stroke-width="0.5"/>
<path d="M907.6 511.3 L961.4 529.3" fill="none" stroke="#0c0c0c" stroke-width="3.4" stroke-linecap="round"/>
<path d="M907.6 511.3 L961.4 529.3" fill="none" stroke="#6e7876" stroke-width="1.8" stroke-linecap="round"/>
<circle cx="961.4" cy="529.3" r="1.5" fill="#2a2a2a" stroke-width="0.5"/>
<circle cx="907.6" cy="511.3" r="1.5" fill="#2a2a2a" stroke-width="0.5"/>
<path d="M896.2 523.7 L900.1 525.0 L900.1 532.7 L898.6 529.6 Z" fill="#3c2e24"/>
</g>
<!-- 28_camo.svg -->
<g id="camo" stroke="#0a0a0a" stroke-width="0.9" stroke-linejoin="round">
<defs><clipPath id="hullclip"><path d="M985.6 550.2 L989.6 547.8 L1002.3 539.3 L1032.6 536.9 L1041.4 536.6 L1193.8 536.6 L1202.5 548.6 L1206.5 548.9 L1207.3 562.9 L1193.0 575.7 L1019.9 575.7 L1009.5 569.6 L987.2 558.5 Z"/></clipPath></defs>
<path d="M1152.3 501.5 L1154.7 501.5 L1154.7 536.1 L1152.3 536.1 Z" fill="#f4f4f4" stroke-width="0.6"/>
<path d="M1141.9 485.6 L1145.9 484.0 L1189.0 531.8 L1177.8 531.8 Z" fill="#5a7a34"/>
<path d="M1141.9 485.6 L1143.7 484.9 L1182.9 531.8 L1177.8 531.8 Z" fill="#3c5a24" stroke="none"/>
<path d="M1200.9 543.8 L1214.5 533.4 L1216.4 535.0 L1203.3 546.7 Z" fill="#4c6c2c"/>
<path d="M1055.5 575.7 L1058.5 575.7 L1058.5 589.3 L1055.5 589.3 Z" fill="#f4f4f4" stroke-width="0.7"/>
<ellipse cx="1057.0" cy="590.1" rx="6.8" ry="1.7" fill="#0a0a0a"/>
<path d="M1054.2 574.4 L1059.8 574.4 L1059.8 576.7 L1054.2 576.7 Z" fill="#6c8434" stroke-width="0.5"/>
<path d="M1186.3 575.7 L1189.3 575.7 L1189.3 589.3 L1186.3 589.3 Z" fill="#f4f4f4" stroke-width="0.7"/>
<ellipse cx="1187.4" cy="590.1" rx="6.8" ry="1.7" fill="#0a0a0a"/>
<path d="M1185.0 574.4 L1190.6 574.4 L1190.6 576.7 L1185.0 576.7 Z" fill="#6c8434" stroke-width="0.5"/>
<path d="M985.6 550.2 L989.6 547.8 L1002.3 539.3 L1032.6 536.9 L1041.4 536.6 L1193.8 536.6 L1202.5 548.6 L1206.5 548.9 L1207.3 562.9 L1193.0 575.7 L1019.9 575.7 L1009.5 569.6 L987.2 558.5 Z" fill="#3c7434"/>
<g clip-path="url(#hullclip)" stroke="none">
<path d="M984.8 550.2 L1002.3 539.0 L1042.2 536.6 L1042.2 561.4 L1019.9 561.7 L1008.7 566.1 L986.4 559.0 Z" fill="#6c8440"/>
<path d="M995.2 548.6 C995.7 546.7 998.4 545.2 1002.3 544.6 C1006.2 544.0 1008.4 544.7 1011.9 546.2 C1015.4 547.7 1016.7 548.9 1017.5 551.0 C1018.3 553.0 1016.5 552.0 1015.4 555.0 C1014.3 557.9 1014.3 561.6 1012.7 563.7 C1011.1 565.9 1009.8 565.9 1008.7 564.2 C1007.6 562.5 1009.1 558.8 1008.1 556.6 C1007.0 554.3 1005.5 553.9 1004.2 554.7 C1003.0 555.4 1003.9 558.9 1002.7 559.8 C1001.4 560.6 999.5 559.8 998.8 558.2 C998.2 556.5 1000.6 554.8 999.8 552.6 C998.9 550.3 994.6 550.5 995.2 548.6 Z" fill="#2f6a34"/>
<path d="M999.1 541.4 C1000.6 540.4 1004.4 539.5 1007.9 539.3 C1011.5 539.2 1014.1 539.8 1014.3 540.6 C1014.5 541.5 1011.7 542.3 1008.7 543.0 C1005.7 543.8 1003.8 544.2 1001.5 543.8 C999.3 543.4 997.7 542.5 999.1 541.4 Z" fill="#2f6a34"/>
<path d="M1032.6 543.8 C1033.9 542.1 1039.3 540.4 1041.4 543.0 C1043.6 545.6 1043.2 553.3 1041.9 555.0 C1040.6 556.6 1038.0 552.8 1035.8 550.2 C1033.7 547.6 1031.3 545.5 1032.6 543.8 Z" fill="#2f6a34"/>
<path d="M1020.7 544.6 C1023.2 541.9 1027.7 542.2 1032.6 543.5 C1037.6 544.8 1039.7 546.2 1041.9 550.2 C1044.1 554.2 1045.2 558.1 1041.9 560.6 C1038.6 563.0 1032.5 561.9 1027.9 560.6 C1023.2 559.3 1023.5 558.7 1021.8 555.0 C1020.1 551.3 1018.1 547.3 1020.7 544.6 Z" fill="#5e4832"/>
<path d="M1015.1 537.4 L1041.4 536.8 L1041.4 541.6 L1018.3 541.9 Z" fill="#5e4832"/>
<path d="M1041.4 536.9 L1055.8 536.9 L1057.4 543.5 L1042.7 543.5 Z" fill="#5e4832"/>
<path d="M1072.5 536.9 L1094.9 536.9 L1096.4 543.5 L1073.8 543.5 Z" fill="#5e4832"/>
<path d="M1117.2 536.9 L1128.3 536.9 L1129.9 543.5 L1118.5 543.5 Z" fill="#7c8c3c"/>
<path d="M1128.3 536.9 L1139.5 536.9 L1141.1 543.5 L1129.6 543.5 Z" fill="#5e4832"/>
<path d="M1155.5 536.9 L1185.8 536.9 L1187.4 543.5 L1156.7 543.5 Z" fill="#5e4832"/>
<path d="M1139.5 536.9 L1155.5 536.9 L1157.1 543.5 L1140.8 543.5 Z" fill="#7c8c3c"/>
<path d="M1055.0 544.1 C1056.5 540.5 1061.7 541.6 1063.7 544.1 C1065.8 546.7 1059.1 551.3 1063.7 555.0 C1068.4 558.6 1079.2 557.0 1083.7 559.8 C1088.2 562.5 1087.7 565.3 1082.9 566.9 C1078.0 568.6 1068.9 568.6 1062.9 566.9 C1057.0 565.3 1059.2 565.1 1057.4 559.8 C1055.5 554.4 1053.5 547.8 1055.0 544.1 Z" fill="#5e4832"/>
<path d="M1085.3 548.9 C1097.6 547.8 1126.7 547.5 1139.5 548.6 C1152.4 549.6 1142.2 552.0 1140.3 553.4 C1138.5 554.7 1135.3 551.1 1131.5 554.3 C1127.8 557.6 1127.5 564.4 1124.4 567.4 C1121.2 570.5 1119.8 570.5 1118.0 567.4 C1116.1 564.4 1123.7 557.6 1116.4 554.3 C1109.1 551.1 1093.8 554.6 1086.6 553.4 C1079.3 552.1 1072.9 550.0 1085.3 548.9 Z" fill="#5e4832"/>
<path d="M1169.8 548.9 C1173.0 544.6 1181.2 544.6 1185.0 548.9 C1188.8 553.2 1189.3 563.1 1186.1 567.4 C1182.9 571.7 1175.2 571.7 1171.4 567.4 C1167.6 563.1 1166.7 553.2 1169.8 548.9 Z" fill="#5e4832"/>
<path d="M1043.8 553.7 C1046.3 550.6 1052.0 550.6 1054.7 553.7 C1057.3 556.8 1057.4 563.8 1055.0 566.9 C1052.5 570.0 1046.7 570.0 1044.1 566.9 C1041.5 563.8 1041.3 556.8 1043.8 553.7 Z" fill="#7c8c3c"/>
<path d="M1130.7 556.6 C1133.9 555.0 1137.8 552.8 1139.5 555.3 C1141.3 557.8 1140.7 564.6 1138.2 567.4 C1135.8 570.2 1132.0 568.6 1129.1 567.4 C1126.3 566.2 1125.6 564.7 1126.0 562.2 C1126.3 559.6 1127.6 558.2 1130.7 556.6 Z" fill="#7c8c3c"/>
<path d="M1155.5 550.2 C1158.1 547.7 1165.1 547.3 1168.2 549.5 C1171.4 551.8 1171.5 557.3 1168.9 559.8 C1166.2 562.2 1159.9 562.3 1156.7 560.1 C1153.6 557.8 1152.8 552.6 1155.5 550.2 Z" fill="#7c8c3c"/>
<path d="M1187.4 555.0 C1189.2 552.4 1193.7 552.4 1195.3 555.0 C1197.0 557.6 1196.4 563.5 1194.5 566.1 C1192.7 568.7 1189.0 568.7 1187.4 566.1 C1185.7 563.5 1185.5 557.6 1187.4 555.0 Z" fill="#7c8c3c"/>
<path d="M1092.5 550.2 C1095.5 548.8 1103.2 548.8 1106.0 550.2 C1108.9 551.6 1107.8 554.8 1104.7 556.2 C1101.7 557.7 1095.8 557.7 1092.9 556.2 C1090.1 554.8 1089.4 551.6 1092.5 550.2 Z" fill="#4a8238"/>
<path d="M984.8 557.5 L1019.9 561.7 L1026.3 573.3 L1192.2 573.3 L1208.1 562.9 L1208.1 577.3 L1008.7 577.3 Z" fill="#1c2a1e"/>
<path d="M1019.9 561.7 L1042.2 561.0 L1207.3 560.6 L1207.3 562.9 L1193.8 572.2 L1026.3 572.2 L1021.8 564.5 Z" fill="#3c7434"/>
<path d="M1059.8 561.4 L1082.1 561.4 L1081.1 572.0 L1060.7 572.0 Z" fill="#5e4832"/>
<path d="M1117.2 561.4 L1144.3 561.4 L1143.3 572.0 L1118.1 572.0 Z" fill="#7c8c3c"/>
<path d="M1169.8 561.4 L1187.4 561.4 L1186.4 572.0 L1170.8 572.0 Z" fill="#5e4832"/>
<path d="M1043.8 561.4 L1056.6 561.4 L1055.6 572.0 L1044.8 572.0 Z" fill="#7c8c3c"/>
<path d="M1082.1 561.4 L1091.7 561.4 L1090.7 572.0 L1083.0 572.0 Z" fill="#7c8c3c"/>
</g>
<path d="M1042.5 545.1 L1204.1 545.1 M1042.5 548.9 L1204.1 548.9 M1042.5 553.7 L1204.1 553.7 M1042.5 558.2 L1204.1 558.2 M1042.5 562.9 L1204.1 562.9 M1042.5 567.4 L1204.1 567.4 M1042.5 571.7 L1204.1 571.7" fill="none" stroke="#101c0c" stroke-width="1"/>
<path d="M1041.9 536.9 L1042.2 561.4 M1032.6 536.9 L1032.6 541.9 L1041.9 541.9" fill="none" stroke-width="0.7"/>
<path d="M1015.1 576.0 L1020.8 563.9 L1043.8 563.9 L1049.5 576.0 Z" fill="#141e16" stroke-width="0.7"/>
<path d="M1081.6 576.0 L1087.4 563.9 L1110.3 563.9 L1116.1 576.0 Z" fill="#141e16" stroke-width="0.7"/>
<path d="M1141.7 576.0 L1147.5 563.9 L1170.5 563.9 L1176.2 576.0 Z" fill="#141e16" stroke-width="0.7"/>
<path d="M1194.5 553.4 L1206.5 553.7 L1207.1 562.9 L1194.5 566.9 Z" fill="#2f6a34" stroke-width="0.6"/>
<path d="M1185.8 554.2 L1193.8 554.2 L1193.8 564.5 L1189.0 564.5 Z" fill="#7c8c3c" stroke-width="0.5"/>
<path d="M1193.8 536.6 L1202.5 548.6 L1206.5 548.9 L1206.5 551.0 L1200.1 551.0 L1192.2 539.3 Z" fill="#3c7434" stroke-width="0.7"/>
<path d="M985.6 550.2 L989.6 547.8 L1002.3 539.3 L1032.6 536.9 L1041.4 536.6 L1193.8 536.6 L1202.5 548.6 L1206.5 548.9 L1207.3 562.9 L1193.0 575.7 L1019.9 575.7 L1009.5 569.6 L987.2 558.5 Z" fill="none" stroke-width="1.1"/>
<path d="M1063.7 547.0 L1082.9 547.0 L1082.9 559.1 L1063.7 559.1 Z" fill="#7cc0ec" stroke-width="1.3"/>
<path d="M1073.2 547.0 L1073.2 559.1" fill="none" stroke-width="1.4"/>
<path d="M1065.3 548.3 L1068.5 548.3 L1071.7 557.8 L1069.3 557.8 Z" fill="#a8d8f8" stroke="none"/>
<path d="M1074.9 548.3 L1077.6 548.3 L1081.5 557.8 L1079.2 557.8 Z" fill="#a8d8f8" stroke="none"/>
<path d="M999.9 543.5 L1012.7 541.6 L1013.5 543.8 L1001.5 546.4 Z" fill="#7cc0ec" stroke-width="0.7"/>
<path d="M1040.6 532.3 L1194.5 532.3 L1195.0 534.4 L1040.6 534.4 Z" fill="#6c8434"/>
<path d="M1059.8 534.4 L1059.8 536.8 M1066.1 534.4 L1066.1 536.8 M1101.2 534.4 L1101.2 536.8 M1107.6 534.4 L1107.6 536.8 M1134.7 534.4 L1134.7 536.8 M1141.1 534.4 L1141.1 536.8 M1152.3 534.4 L1152.3 536.8 M1181.0 534.4 L1181.0 536.8" fill="none" stroke-width="0.6"/>
<path d="M1058.2 534.4 L1182.6 534.4 L1182.6 536.1 L1058.2 536.1 Z" fill="#4c6c2c" stroke-width="0.5"/>
<path d="M1066.9 535.0 L1100.4 535.0 L1100.4 536.0 L1066.9 536.0 Z M1108.4 535.0 L1133.9 535.0 L1133.9 536.0 L1108.4 536.0 Z M1141.9 535.0 L1151.5 535.0 L1151.5 536.0 L1141.9 536.0 Z M1155.5 535.0 L1180.2 535.0 L1180.2 536.0 L1155.5 536.0 Z" fill="#cccccc" stroke="none"/>
<use href="#wheel" transform="translate(1032.3 576.8) scale(13.6)"/>
<use href="#wheel" transform="translate(1098.8 576.8) scale(13.6)"/>
<use href="#wheel" transform="translate(1159.0 576.8) scale(13.6)"/>
</g>
</svg>
</body></html>
